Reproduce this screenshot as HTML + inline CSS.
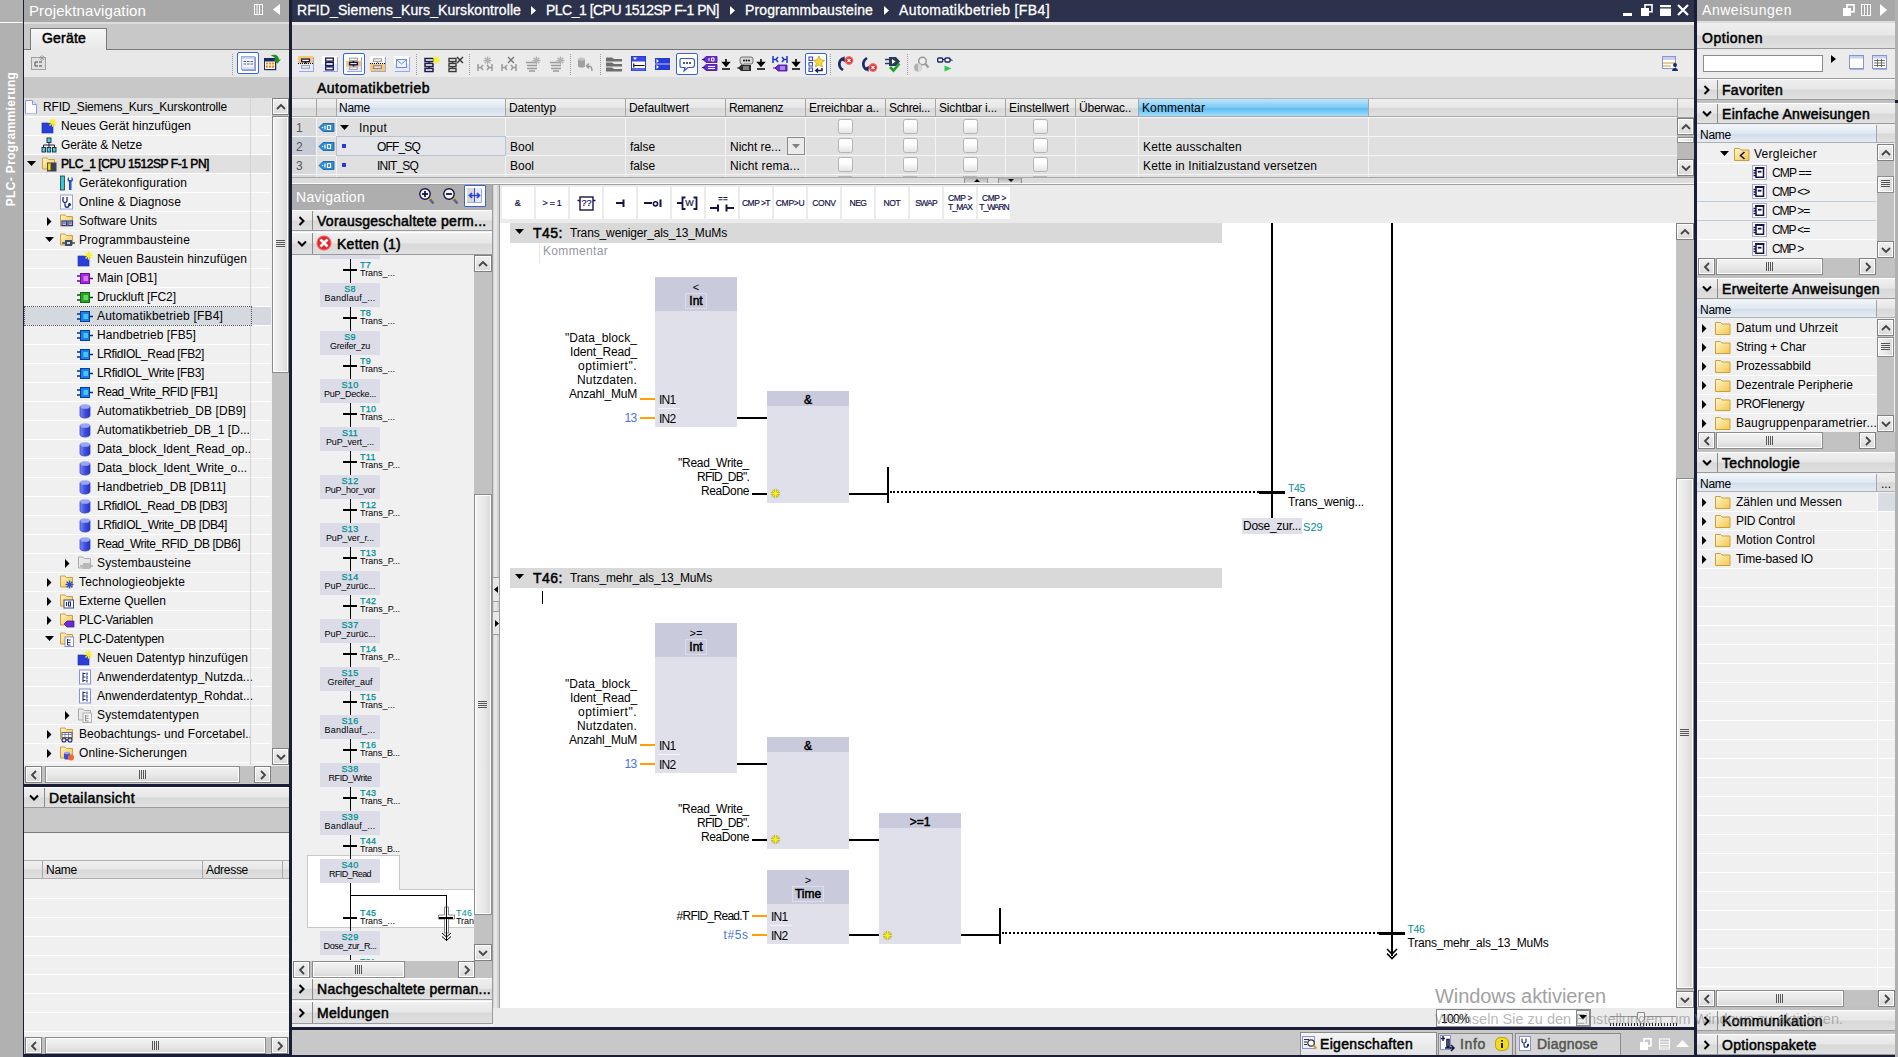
<!DOCTYPE html>
<html><head><meta charset="utf-8"><title>TIA</title>
<style>
html,body{margin:0;padding:0;}
body{width:1898px;height:1057px;overflow:hidden;position:relative;background:#e8e8e8;font-family:"Liberation Sans",sans-serif;font-size:12px;}
div,.a,.t{position:absolute;box-sizing:border-box;}
.t{white-space:pre;}
svg{overflow:visible;}
.hd{background:linear-gradient(#efefef 0%,#e7e7e7 47%,#d8d8d8 53%,#e0e0e0 100%);}
.sb{background:linear-gradient(90deg,#f4f4f4,#e6e6e6 60%,#d8d8d8);border:1px solid #8c8c8c;box-shadow:inset 0 0 0 1px #fff;}
.sbh{background:linear-gradient(#f4f4f4,#e6e6e6 60%,#d8d8d8);border:1px solid #8c8c8c;box-shadow:inset 0 0 0 1px #fff;}
.btn{background:linear-gradient(#f0f0f0,#dadada);border:1px solid #808080;box-shadow:inset 0 0 0 1px #fff;}
</style></head><body>
<div style="left:0px;top:0px;width:1898px;height:1057px;background:#c8c8c8;"></div>
<div style="left:0px;top:0px;width:23px;height:1057px;background:#b1b1b1;"></div>
<div style="left:0px;top:22px;width:23px;height:1px;background:#fff;"></div>
<div style="left:23px;top:0px;width:1px;height:1057px;background:#191e36;"></div>
<span class="t" style="left:10.5px;top:139px;font-size:12px;font-weight:bold;color:#fff;letter-spacing:0.341px;transform:translate(-50%,-50%) rotate(-90deg);">PLC- Programmierung</span>
<div style="left:24px;top:0px;width:265px;height:22px;background:#a8a8a8;"></div>
<span class="t" style="left:29px;top:0.5px;font-size:15px;line-height:19px;color:#fff;letter-spacing:0.114px;">Projektnavigation</span>
<svg class="a" style="left:254px;top:4px;" width="9" height="12" viewBox="0 0 9 12"><rect x=".5" y=".5" width="8" height="10" fill="none" stroke="#fff"/><path d="M3 1v10M5.5 1v10" stroke="#fff"/></svg>
<svg class="a" style="left:273px;top:4px;" width="8" height="11" viewBox="0 0 8 11"><path d="M7 0v11l-7-5.5z" fill="#fff"/></svg>
<div style="left:24px;top:22px;width:265px;height:27px;background:#c8c8c8;"></div>
<div style="left:24px;top:22px;width:265px;height:2px;background:#dcdcdc;"></div>
<div style="left:24px;top:49px;width:265px;height:1px;background:#7a7a7a;"></div>
<div style="left:30px;top:28px;width:77px;height:22px;background:linear-gradient(#f6f6f6,#e8e8e8);border:1px solid #7a7a7a;border-bottom:none;"></div>
<span class="t" style="left:42px;top:28.5px;font-size:14px;line-height:18px;color:#000;-webkit-text-stroke:0.5px #000;letter-spacing:0.200px;">Geräte</span>
<div style="left:24px;top:50px;width:265px;height:27px;background:#e8e8e8;"></div>
<svg class="a" style="left:31px;top:55px;" width="16" height="16" viewBox="0 0 16 16"><rect x=".5" y="2.5" width="14" height="12" fill="#e0e0e0" stroke="#a0a0a0"/><path d="M4 7h3M4 11h3M8 7h3M8 11h3M4 7v4" stroke="#777" stroke-width="1.4"/><path d="M11 0v6M8 3h6M9 1l4 4M13 1l-4 4" stroke="#999" stroke-width=".8"/></svg>
<div style="left:232px;top:54px;width:1px;height:21px;border-left:1px dotted #999;"></div>
<div style="left:237px;top:52px;width:22px;height:22px;background:#fff;border:1px solid #3a62d8;border-radius:2px;"></div>
<svg class="a" style="left:241px;top:56px;" width="15" height="15" viewBox="0 0 15 15"><rect x="1" y="1" width="14" height="14" fill="#8a96d8"/><rect x=".5" y=".5" width="13" height="13" fill="#f4f6ff" stroke="#a0a8e0"/><rect x="1" y="1" width="12" height="2" fill="#c8d0f4"/><path d="M2.500 5.500h2.500M6 5.500h2.500M9.500 5.500h2.500M2.500 8h2.500M6 8h2.500M9.500 8h2.500" stroke="#5a6078" stroke-width="1.100"/><rect x="1" y="11" width="12" height="2" fill="#dfe3fa"/></svg>
<svg class="a" style="left:264px;top:54px;" width="18" height="18" viewBox="0 0 18 18"><rect x="1.5" y="5.5" width="11" height="11" fill="#8a96c8"/><rect x=".5" y="4.5" width="11" height="11" fill="#fff" stroke="#1a2a5a"/><rect x="1" y="5" width="10" height="2.500" fill="#1a2a5a"/><path d="M2 9.500h2.200M5 9.500h2.200M8 9.500h2.200M2 12.700h2.200M5 12.700h2.200M8 12.700h2.200" stroke="#f08a10" stroke-width="2.200"/><path d="M6.500 1.500c4-2 8.500-.5 8.500 4h2l-3.800 4.200-3.800-4.200h2.100c0-2-1.800-3-5-4z" fill="#1f8f2a"/></svg>
<div style="left:24px;top:77px;width:265px;height:21px;background:#c8c8c8;"></div>
<div style="left:24px;top:98px;width:247px;height:667px;background:#f0f0f0;"></div>
<div style="left:24px;top:98px;width:247px;height:18px;background:#e2e2e2;"></div>
<div style="left:24px;top:116px;width:247px;height:1px;background:#fff;"></div>
<svg class="a" style="left:22.5px;top:99px;" width="16" height="16" viewBox="0 0 16 16"><path d="M2.5 1.5h7l4 4v9h-11z" fill="#fafaff" stroke="#8f97d8"/><path d="M9.5 1.5v4h4" fill="#dfe3fa" stroke="#8f97d8"/><path d="M3 14.5h10.5" stroke="#b9bfe8"/></svg>
<span class="t" style="left:43px;top:99.0px;font-size:12px;line-height:16px;color:#000;letter-spacing:-0.174px;">RFID_Siemens_Kurs_Kurskontrolle</span>
<div style="left:24px;top:135px;width:247px;height:1px;background:#fff;"></div>
<svg class="a" style="left:41px;top:118px;" width="16" height="16" viewBox="0 0 16 16"><rect x="1" y="5" width="11" height="10" fill="#2a3fd8"/><rect x="1" y="5" width="11" height="10" fill="none" stroke="#1a2aa8" stroke-width=".6"/><line x1="7.3" y1="4.5" x2="15.7" y2="4.5" stroke="#f5ee2a" stroke-width="1.3"/><line x1="8.5" y1="1.5" x2="14.5" y2="7.5" stroke="#f5ee2a" stroke-width="1.3"/><line x1="11.5" y1="0.3" x2="11.5" y2="8.7" stroke="#f5ee2a" stroke-width="1.3"/><line x1="14.5" y1="1.5" x2="8.5" y2="7.5" stroke="#f5ee2a" stroke-width="1.3"/></svg>
<span class="t" style="left:61px;top:118.0px;font-size:12px;line-height:16px;color:#000;letter-spacing:-0.004px;">Neues Gerät hinzufügen</span>
<div style="left:24px;top:154px;width:247px;height:1px;background:#fff;"></div>
<svg class="a" style="left:41px;top:137px;" width="16" height="16" viewBox="0 0 16 16"><rect x="6" y="1" width="4" height="4.5" fill="#45d0e0" stroke="#223" stroke-width=".9"/><path d="M8 5.5v2.500M2.500 10.500v-2.500h11v2.500M8 8v2.500" stroke="#223" fill="none"/><rect x="1" y="10.500" width="3.500" height="4.500" fill="#45d0e0" stroke="#223" stroke-width=".9"/><rect x="6.200" y="10.500" width="3.500" height="4.500" fill="#45d0e0" stroke="#223" stroke-width=".9"/><rect x="11.500" y="10.500" width="3.500" height="4.500" fill="#45d0e0" stroke="#223" stroke-width=".9"/></svg>
<span class="t" style="left:61px;top:137.0px;font-size:12px;line-height:16px;color:#000;letter-spacing:-0.122px;">Geräte &amp; Netze</span>
<div style="left:24px;top:155px;width:247px;height:18px;background:#e0e0e0;"></div>
<div style="left:24px;top:173px;width:247px;height:1px;background:#fff;"></div>
<svg class="a" style="left:41px;top:156px;" width="16" height="16" viewBox="0 0 16 16"><defs><linearGradient id="fg" x1="0" y1="0" x2="1" y2="1"><stop offset="0" stop-color="#fef3c8"/><stop offset="1" stop-color="#f2c24a"/></linearGradient></defs><path d="M1.5 2h4.500l1.500 1.500h6v9.500h-12z" fill="url(#fg)" stroke="#c9a040" stroke-width="1"/><rect x="6" y="6.500" width="9.500" height="9" fill="#3a4054"/><rect x="7" y="7.500" width="2.500" height="6.500" fill="#f5e61a" stroke="#a89a10" stroke-width=".5"/></svg>
<svg class="a" style="left:27px;top:161px;" width="9" height="6" viewBox="0 0 9 6"><path d="M0 0h9l-4.5 5z" fill="#000"/></svg>
<span class="t" style="left:61px;top:156.0px;font-size:12px;line-height:16px;color:#000;-webkit-text-stroke:0.5px #000;letter-spacing:-0.448px;">PLC_1 [CPU 1512SP F-1 PN]</span>
<div style="left:24px;top:192px;width:247px;height:1px;background:#fff;"></div>
<svg class="a" style="left:59px;top:175px;" width="16" height="16" viewBox="0 0 16 16"><rect x="1.5" y="1" width="4" height="14" fill="#35c7d8" stroke="#333" stroke-width=".8"/><path d="M10 2c-2 1-2 4 0 5v8h2.5v-8c2-1 2-4 0-5v3h-2.5z" fill="#2452c8"/></svg>
<span class="t" style="left:79px;top:175.0px;font-size:12px;line-height:16px;color:#000;letter-spacing:0.137px;">Gerätekonfiguration</span>
<div style="left:24px;top:211px;width:247px;height:1px;background:#fff;"></div>
<svg class="a" style="left:59px;top:194px;" width="16" height="16" viewBox="0 0 16 16"><rect x="1.5" y="1" width="12" height="14" fill="#fff" stroke="#9aa0d8"/><path d="M4 3v4c0 2 4 2 4 0v-4M6 9v2c0 3 4 3 4 0" fill="none" stroke="#1d2a78" stroke-width="1.3"/><circle cx="10.5" cy="10.5" r="1.6" fill="#1d2a78"/></svg>
<span class="t" style="left:79px;top:194.0px;font-size:12px;line-height:16px;color:#000;letter-spacing:0.114px;">Online &amp; Diagnose</span>
<div style="left:24px;top:230px;width:247px;height:1px;background:#fff;"></div>
<svg class="a" style="left:59px;top:213px;" width="16" height="16" viewBox="0 0 16 16"><defs><linearGradient id="fg" x1="0" y1="0" x2="1" y2="1"><stop offset="0" stop-color="#fef3c8"/><stop offset="1" stop-color="#f2c24a"/></linearGradient></defs><path d="M1.5 2h4.500l1.500 1.500h6v9.500h-12z" fill="url(#fg)" stroke="#c9a040" stroke-width="1"/><rect x="3" y="8" width="4.5" height="4.5" fill="none" stroke="#1d3ab8" stroke-width="1.2"/><rect x="9" y="8" width="4.5" height="4.5" fill="none" stroke="#1d3ab8" stroke-width="1.2"/><path d="M4 10h2.5M10 10h2.5" stroke="#1d3ab8"/></svg>
<svg class="a" style="left:47px;top:216.5px;" width="5" height="9" viewBox="0 0 5 9"><path d="M0 0v9l4.500-4.500z" fill="#000"/></svg>
<span class="t" style="left:79px;top:213.0px;font-size:12px;line-height:16px;color:#000;letter-spacing:-0.002px;">Software Units</span>
<div style="left:24px;top:249px;width:247px;height:1px;background:#fff;"></div>
<svg class="a" style="left:59px;top:232px;" width="16" height="16" viewBox="0 0 16 16"><defs><linearGradient id="fg" x1="0" y1="0" x2="1" y2="1"><stop offset="0" stop-color="#fef3c8"/><stop offset="1" stop-color="#f2c24a"/></linearGradient></defs><path d="M1.5 2h4.500l1.500 1.500h6v9.500h-12z" fill="url(#fg)" stroke="#c9a040" stroke-width="1"/><rect x="6" y="8" width="7" height="6" fill="#3c4a6a"/><path d="M3 11h3M13 11h3" stroke="#3c4a6a" stroke-width="1.4"/><rect x="8" y="10" width="3" height="2" fill="#cfd6ea"/></svg>
<svg class="a" style="left:45px;top:237px;" width="9" height="6" viewBox="0 0 9 6"><path d="M0 0h9l-4.5 5z" fill="#000"/></svg>
<span class="t" style="left:79px;top:232.0px;font-size:12px;line-height:16px;color:#000;letter-spacing:0.173px;">Programmbausteine</span>
<div style="left:24px;top:268px;width:247px;height:1px;background:#fff;"></div>
<svg class="a" style="left:77px;top:251px;" width="16" height="16" viewBox="0 0 16 16"><rect x="1" y="5" width="11" height="10" fill="#2a3fd8"/><rect x="1" y="5" width="11" height="10" fill="none" stroke="#1a2aa8" stroke-width=".6"/><line x1="7.3" y1="4.5" x2="15.7" y2="4.5" stroke="#f5ee2a" stroke-width="1.3"/><line x1="8.5" y1="1.5" x2="14.5" y2="7.5" stroke="#f5ee2a" stroke-width="1.3"/><line x1="11.5" y1="0.3" x2="11.5" y2="8.7" stroke="#f5ee2a" stroke-width="1.3"/><line x1="14.5" y1="1.5" x2="8.5" y2="7.5" stroke="#f5ee2a" stroke-width="1.3"/></svg>
<span class="t" style="left:97px;top:251.0px;font-size:12px;line-height:16px;color:#000;letter-spacing:0.102px;">Neuen Baustein hinzufügen</span>
<div style="left:24px;top:287px;width:247px;height:1px;background:#fff;"></div>
<svg class="a" style="left:77px;top:270px;" width="16" height="16" viewBox="0 0 16 16"><path d="M0 6h4M0 11h4M12 8.500h4" stroke="#5a1080" stroke-width="1.700"/><rect x="3.500" y="3.500" width="9" height="10" fill="#a828e0" stroke="#6a10a0"/><rect x="6.500" y="6" width="4.500" height="5" fill="#dc7aff"/></svg>
<span class="t" style="left:97px;top:270.0px;font-size:12px;line-height:16px;color:#000;letter-spacing:-0.002px;">Main [OB1]</span>
<div style="left:24px;top:306px;width:247px;height:1px;background:#fff;"></div>
<svg class="a" style="left:77px;top:289px;" width="16" height="16" viewBox="0 0 16 16"><path d="M0 6h4M0 11h4M12 8.500h4" stroke="#0a4a0a" stroke-width="1.700"/><rect x="3.500" y="3.500" width="9" height="10" fill="#2aa02a" stroke="#106a10"/><rect x="6.500" y="6" width="4.500" height="5" fill="#62d862"/></svg>
<span class="t" style="left:97px;top:289.0px;font-size:12px;line-height:16px;color:#000;letter-spacing:-0.068px;">Druckluft [FC2]</span>
<div style="left:24px;top:307px;width:247px;height:18px;background:#d3d9df;"></div>
<div style="left:24px;top:325px;width:247px;height:1px;background:#fff;"></div>
<div style="left:24px;top:306px;width:228px;height:20px;border:1px dotted #555;"></div>
<svg class="a" style="left:77px;top:308px;" width="16" height="16" viewBox="0 0 16 16"><path d="M0 6h4M0 11h4M12 8.500h4" stroke="#0a2a80" stroke-width="1.700"/><rect x="3.500" y="3.500" width="9" height="10" fill="#1a80e8" stroke="#0a3aa0"/><rect x="6.500" y="6" width="4.500" height="5" fill="#40c8ff"/></svg>
<span class="t" style="left:97px;top:308.0px;font-size:12px;line-height:16px;color:#000;letter-spacing:0.179px;">Automatikbetrieb [FB4]</span>
<div style="left:24px;top:344px;width:247px;height:1px;background:#fff;"></div>
<svg class="a" style="left:77px;top:327px;" width="16" height="16" viewBox="0 0 16 16"><path d="M0 6h4M0 11h4M12 8.500h4" stroke="#0a2a80" stroke-width="1.700"/><rect x="3.500" y="3.500" width="9" height="10" fill="#1a80e8" stroke="#0a3aa0"/><rect x="6.500" y="6" width="4.500" height="5" fill="#40c8ff"/></svg>
<span class="t" style="left:97px;top:327.0px;font-size:12px;line-height:16px;color:#000;letter-spacing:0.095px;">Handbetrieb [FB5]</span>
<div style="left:24px;top:363px;width:247px;height:1px;background:#fff;"></div>
<svg class="a" style="left:77px;top:346px;" width="16" height="16" viewBox="0 0 16 16"><path d="M0 6h4M0 11h4M12 8.500h4" stroke="#0a2a80" stroke-width="1.700"/><rect x="3.500" y="3.500" width="9" height="10" fill="#1a80e8" stroke="#0a3aa0"/><rect x="6.500" y="6" width="4.500" height="5" fill="#40c8ff"/></svg>
<span class="t" style="left:97px;top:346.0px;font-size:12px;line-height:16px;color:#000;letter-spacing:-0.407px;">LRfidIOL_Read [FB2]</span>
<div style="left:24px;top:382px;width:247px;height:1px;background:#fff;"></div>
<svg class="a" style="left:77px;top:365px;" width="16" height="16" viewBox="0 0 16 16"><path d="M0 6h4M0 11h4M12 8.500h4" stroke="#0a2a80" stroke-width="1.700"/><rect x="3.500" y="3.500" width="9" height="10" fill="#1a80e8" stroke="#0a3aa0"/><rect x="6.500" y="6" width="4.500" height="5" fill="#40c8ff"/></svg>
<span class="t" style="left:97px;top:365.0px;font-size:12px;line-height:16px;color:#000;letter-spacing:-0.341px;">LRfidIOL_Write [FB3]</span>
<div style="left:24px;top:401px;width:247px;height:1px;background:#fff;"></div>
<svg class="a" style="left:77px;top:384px;" width="16" height="16" viewBox="0 0 16 16"><path d="M0 6h4M0 11h4M12 8.500h4" stroke="#0a2a80" stroke-width="1.700"/><rect x="3.500" y="3.500" width="9" height="10" fill="#1a80e8" stroke="#0a3aa0"/><rect x="6.500" y="6" width="4.500" height="5" fill="#40c8ff"/></svg>
<span class="t" style="left:97px;top:384.0px;font-size:12px;line-height:16px;color:#000;letter-spacing:-0.468px;">Read_Write_RFID [FB1]</span>
<div style="left:24px;top:420px;width:247px;height:1px;background:#fff;"></div>
<svg class="a" style="left:77px;top:403px;" width="16" height="16" viewBox="0 0 16 16"><defs><linearGradient id="dbg"><stop offset="0" stop-color="#7a88f8"/><stop offset=".5" stop-color="#3d4fe0"/><stop offset="1" stop-color="#2a34c0"/></linearGradient></defs><path d="M3 3.5v9c0 1.6 2.2 2.5 5 2.5s5-.9 5-2.5v-9z" fill="url(#dbg)"/><ellipse cx="8" cy="3.5" rx="5" ry="2.3" fill="#9aa6f5"/><path d="M3 3.5v9c0 1.6 2.2 2.5 5 2.5s5-.9 5-2.5v-9" fill="none" stroke="#2a38b8" stroke-width=".7"/></svg>
<span class="t" style="left:97px;top:403.0px;font-size:12px;line-height:16px;color:#000;letter-spacing:0.090px;">Automatikbetrieb_DB [DB9]</span>
<div style="left:24px;top:439px;width:247px;height:1px;background:#fff;"></div>
<svg class="a" style="left:77px;top:422px;" width="16" height="16" viewBox="0 0 16 16"><defs><linearGradient id="dbg"><stop offset="0" stop-color="#7a88f8"/><stop offset=".5" stop-color="#3d4fe0"/><stop offset="1" stop-color="#2a34c0"/></linearGradient></defs><path d="M3 3.5v9c0 1.6 2.2 2.5 5 2.5s5-.9 5-2.5v-9z" fill="url(#dbg)"/><ellipse cx="8" cy="3.5" rx="5" ry="2.3" fill="#9aa6f5"/><path d="M3 3.5v9c0 1.6 2.2 2.5 5 2.5s5-.9 5-2.5v-9" fill="none" stroke="#2a38b8" stroke-width=".7"/></svg>
<span class="t" style="left:97px;top:422.0px;font-size:12px;line-height:16px;color:#000;letter-spacing:0.034px;">Automatikbetrieb_DB_1 [D...</span>
<div style="left:24px;top:458px;width:247px;height:1px;background:#fff;"></div>
<svg class="a" style="left:77px;top:441px;" width="16" height="16" viewBox="0 0 16 16"><defs><linearGradient id="dbg"><stop offset="0" stop-color="#7a88f8"/><stop offset=".5" stop-color="#3d4fe0"/><stop offset="1" stop-color="#2a34c0"/></linearGradient></defs><path d="M3 3.5v9c0 1.6 2.2 2.5 5 2.5s5-.9 5-2.5v-9z" fill="url(#dbg)"/><ellipse cx="8" cy="3.5" rx="5" ry="2.3" fill="#9aa6f5"/><path d="M3 3.5v9c0 1.6 2.2 2.5 5 2.5s5-.9 5-2.5v-9" fill="none" stroke="#2a38b8" stroke-width=".7"/></svg>
<span class="t" style="left:97px;top:441.0px;font-size:12px;line-height:16px;color:#000;letter-spacing:-0.056px;">Data_block_Ident_Read_op..</span>
<div style="left:24px;top:477px;width:247px;height:1px;background:#fff;"></div>
<svg class="a" style="left:77px;top:460px;" width="16" height="16" viewBox="0 0 16 16"><defs><linearGradient id="dbg"><stop offset="0" stop-color="#7a88f8"/><stop offset=".5" stop-color="#3d4fe0"/><stop offset="1" stop-color="#2a34c0"/></linearGradient></defs><path d="M3 3.5v9c0 1.6 2.2 2.5 5 2.5s5-.9 5-2.5v-9z" fill="url(#dbg)"/><ellipse cx="8" cy="3.5" rx="5" ry="2.3" fill="#9aa6f5"/><path d="M3 3.5v9c0 1.6 2.2 2.5 5 2.5s5-.9 5-2.5v-9" fill="none" stroke="#2a38b8" stroke-width=".7"/></svg>
<span class="t" style="left:97px;top:460.0px;font-size:12px;line-height:16px;color:#000;letter-spacing:-0.044px;">Data_block_Ident_Write_o...</span>
<div style="left:24px;top:496px;width:247px;height:1px;background:#fff;"></div>
<svg class="a" style="left:77px;top:479px;" width="16" height="16" viewBox="0 0 16 16"><defs><linearGradient id="dbg"><stop offset="0" stop-color="#7a88f8"/><stop offset=".5" stop-color="#3d4fe0"/><stop offset="1" stop-color="#2a34c0"/></linearGradient></defs><path d="M3 3.5v9c0 1.6 2.2 2.5 5 2.5s5-.9 5-2.5v-9z" fill="url(#dbg)"/><ellipse cx="8" cy="3.5" rx="5" ry="2.3" fill="#9aa6f5"/><path d="M3 3.5v9c0 1.6 2.2 2.5 5 2.5s5-.9 5-2.5v-9" fill="none" stroke="#2a38b8" stroke-width=".7"/></svg>
<span class="t" style="left:97px;top:479.0px;font-size:12px;line-height:16px;color:#000;letter-spacing:0.055px;">Handbetrieb_DB [DB11]</span>
<div style="left:24px;top:515px;width:247px;height:1px;background:#fff;"></div>
<svg class="a" style="left:77px;top:498px;" width="16" height="16" viewBox="0 0 16 16"><defs><linearGradient id="dbg"><stop offset="0" stop-color="#7a88f8"/><stop offset=".5" stop-color="#3d4fe0"/><stop offset="1" stop-color="#2a34c0"/></linearGradient></defs><path d="M3 3.5v9c0 1.6 2.2 2.5 5 2.5s5-.9 5-2.5v-9z" fill="url(#dbg)"/><ellipse cx="8" cy="3.5" rx="5" ry="2.3" fill="#9aa6f5"/><path d="M3 3.5v9c0 1.6 2.2 2.5 5 2.5s5-.9 5-2.5v-9" fill="none" stroke="#2a38b8" stroke-width=".7"/></svg>
<span class="t" style="left:97px;top:498.0px;font-size:12px;line-height:16px;color:#000;letter-spacing:-0.427px;">LRfidIOL_Read_DB [DB3]</span>
<div style="left:24px;top:534px;width:247px;height:1px;background:#fff;"></div>
<svg class="a" style="left:77px;top:517px;" width="16" height="16" viewBox="0 0 16 16"><defs><linearGradient id="dbg"><stop offset="0" stop-color="#7a88f8"/><stop offset=".5" stop-color="#3d4fe0"/><stop offset="1" stop-color="#2a34c0"/></linearGradient></defs><path d="M3 3.5v9c0 1.6 2.2 2.5 5 2.5s5-.9 5-2.5v-9z" fill="url(#dbg)"/><ellipse cx="8" cy="3.5" rx="5" ry="2.3" fill="#9aa6f5"/><path d="M3 3.5v9c0 1.6 2.2 2.5 5 2.5s5-.9 5-2.5v-9" fill="none" stroke="#2a38b8" stroke-width=".7"/></svg>
<span class="t" style="left:97px;top:517.0px;font-size:12px;line-height:16px;color:#000;letter-spacing:-0.369px;">LRfidIOL_Write_DB [DB4]</span>
<div style="left:24px;top:553px;width:247px;height:1px;background:#fff;"></div>
<svg class="a" style="left:77px;top:536px;" width="16" height="16" viewBox="0 0 16 16"><defs><linearGradient id="dbg"><stop offset="0" stop-color="#7a88f8"/><stop offset=".5" stop-color="#3d4fe0"/><stop offset="1" stop-color="#2a34c0"/></linearGradient></defs><path d="M3 3.5v9c0 1.6 2.2 2.5 5 2.5s5-.9 5-2.5v-9z" fill="url(#dbg)"/><ellipse cx="8" cy="3.5" rx="5" ry="2.3" fill="#9aa6f5"/><path d="M3 3.5v9c0 1.6 2.2 2.5 5 2.5s5-.9 5-2.5v-9" fill="none" stroke="#2a38b8" stroke-width=".7"/></svg>
<span class="t" style="left:97px;top:536.0px;font-size:12px;line-height:16px;color:#000;letter-spacing:-0.479px;">Read_Write_RFID_DB [DB6]</span>
<div style="left:24px;top:572px;width:247px;height:1px;background:#fff;"></div>
<svg class="a" style="left:77px;top:555px;" width="16" height="16" viewBox="0 0 16 16"><path d="M1.500 2h4.500l1.500 1.500h6v9.500h-12z" fill="#e8e8e8" stroke="#acacac" stroke-width="1"/><rect x="6" y="8" width="7" height="6" fill="#b8b8b8"/><path d="M3 11h3M13 11h3" stroke="#a8a8a8" stroke-width="1.4"/></svg>
<svg class="a" style="left:65px;top:558.5px;" width="5" height="9" viewBox="0 0 5 9"><path d="M0 0v9l4.500-4.500z" fill="#000"/></svg>
<span class="t" style="left:97px;top:555.0px;font-size:12px;line-height:16px;color:#000;letter-spacing:0.130px;">Systembausteine</span>
<div style="left:24px;top:591px;width:247px;height:1px;background:#fff;"></div>
<svg class="a" style="left:59px;top:574px;" width="16" height="16" viewBox="0 0 16 16"><defs><linearGradient id="fg" x1="0" y1="0" x2="1" y2="1"><stop offset="0" stop-color="#fef3c8"/><stop offset="1" stop-color="#f2c24a"/></linearGradient></defs><path d="M1.5 2h4.500l1.500 1.500h6v9.500h-12z" fill="url(#fg)" stroke="#c9a040" stroke-width="1"/><line x1="6.5" y1="10.5" x2="14.5" y2="10.5" stroke="#2452c8" stroke-width="1.3"/><line x1="7.7" y1="7.7" x2="13.3" y2="13.3" stroke="#2452c8" stroke-width="1.3"/><line x1="10.5" y1="6.5" x2="10.5" y2="14.5" stroke="#2452c8" stroke-width="1.3"/><line x1="13.3" y1="7.7" x2="7.7" y2="13.3" stroke="#2452c8" stroke-width="1.3"/></svg>
<svg class="a" style="left:47px;top:577.5px;" width="5" height="9" viewBox="0 0 5 9"><path d="M0 0v9l4.500-4.500z" fill="#000"/></svg>
<span class="t" style="left:79px;top:574.0px;font-size:12px;line-height:16px;color:#000;letter-spacing:0.181px;">Technologieobjekte</span>
<div style="left:24px;top:610px;width:247px;height:1px;background:#fff;"></div>
<svg class="a" style="left:59px;top:593px;" width="16" height="16" viewBox="0 0 16 16"><defs><linearGradient id="fg" x1="0" y1="0" x2="1" y2="1"><stop offset="0" stop-color="#fef3c8"/><stop offset="1" stop-color="#f2c24a"/></linearGradient></defs><path d="M1.5 2h4.500l1.500 1.500h6v9.500h-12z" fill="url(#fg)" stroke="#c9a040" stroke-width="1"/><rect x="5" y="7" width="9.5" height="8" fill="#fff" stroke="#3c4a8a"/><path d="M7.5 9v4M9.5 9h2v4h-2z" stroke="#1d2a78" fill="none" stroke-width="1.1"/></svg>
<svg class="a" style="left:47px;top:596.5px;" width="5" height="9" viewBox="0 0 5 9"><path d="M0 0v9l4.500-4.500z" fill="#000"/></svg>
<span class="t" style="left:79px;top:593.0px;font-size:12px;line-height:16px;color:#000;letter-spacing:0.063px;">Externe Quellen</span>
<div style="left:24px;top:629px;width:247px;height:1px;background:#fff;"></div>
<svg class="a" style="left:59px;top:612px;" width="16" height="16" viewBox="0 0 16 16"><defs><linearGradient id="fg" x1="0" y1="0" x2="1" y2="1"><stop offset="0" stop-color="#fef3c8"/><stop offset="1" stop-color="#f2c24a"/></linearGradient></defs><path d="M1.5 2h4.500l1.500 1.500h6v9.500h-12z" fill="url(#fg)" stroke="#c9a040" stroke-width="1"/><path d="M5 12l3-3h7v6h-7z" fill="#6a2ad8" stroke="#3a168a" stroke-width=".7"/></svg>
<svg class="a" style="left:47px;top:615.5px;" width="5" height="9" viewBox="0 0 5 9"><path d="M0 0v9l4.500-4.500z" fill="#000"/></svg>
<span class="t" style="left:79px;top:612.0px;font-size:12px;line-height:16px;color:#000;letter-spacing:-0.242px;">PLC-Variablen</span>
<div style="left:24px;top:648px;width:247px;height:1px;background:#fff;"></div>
<svg class="a" style="left:59px;top:631px;" width="16" height="16" viewBox="0 0 16 16"><defs><linearGradient id="fg" x1="0" y1="0" x2="1" y2="1"><stop offset="0" stop-color="#fef3c8"/><stop offset="1" stop-color="#f2c24a"/></linearGradient></defs><path d="M1.5 2h4.500l1.500 1.500h6v9.500h-12z" fill="url(#fg)" stroke="#c9a040" stroke-width="1"/><rect x="6" y="6" width="8.5" height="9.5" fill="#fff" stroke="#8a90c8"/><path d="M8.5 8v6M8.5 9h3M8.5 11.5h3M8.5 14h3" stroke="#1d2a78" fill="none"/></svg>
<svg class="a" style="left:45px;top:636px;" width="9" height="6" viewBox="0 0 9 6"><path d="M0 0h9l-4.5 5z" fill="#000"/></svg>
<span class="t" style="left:79px;top:631.0px;font-size:12px;line-height:16px;color:#000;letter-spacing:-0.265px;">PLC-Datentypen</span>
<div style="left:24px;top:667px;width:247px;height:1px;background:#fff;"></div>
<svg class="a" style="left:77px;top:650px;" width="16" height="16" viewBox="0 0 16 16"><rect x="1" y="5" width="11" height="10" fill="#2a3fd8"/><rect x="1" y="5" width="11" height="10" fill="none" stroke="#1a2aa8" stroke-width=".6"/><line x1="7.3" y1="4.5" x2="15.7" y2="4.5" stroke="#f5ee2a" stroke-width="1.3"/><line x1="8.5" y1="1.5" x2="14.5" y2="7.5" stroke="#f5ee2a" stroke-width="1.3"/><line x1="11.5" y1="0.3" x2="11.5" y2="8.7" stroke="#f5ee2a" stroke-width="1.3"/><line x1="14.5" y1="1.5" x2="8.5" y2="7.5" stroke="#f5ee2a" stroke-width="1.3"/></svg>
<span class="t" style="left:97px;top:650.0px;font-size:12px;line-height:16px;color:#000;letter-spacing:0.089px;">Neuen Datentyp hinzufügen</span>
<div style="left:24px;top:686px;width:247px;height:1px;background:#fff;"></div>
<svg class="a" style="left:77px;top:669px;" width="16" height="16" viewBox="0 0 16 16"><rect x="2.5" y="1" width="11" height="14" fill="#fff" stroke="#8a90d8"/><path d="M6 3.5v9.5M6 4.5h2.5M6 8h2.5M6 11.5h2.5M10 3.5v3M10 7v3M10 10.5v3" stroke="#1d2a78" fill="none" stroke-width="1.1"/></svg>
<span class="t" style="left:97px;top:669.0px;font-size:12px;line-height:16px;color:#000;letter-spacing:0.047px;">Anwenderdatentyp_Nutzda...</span>
<div style="left:24px;top:705px;width:247px;height:1px;background:#fff;"></div>
<svg class="a" style="left:77px;top:688px;" width="16" height="16" viewBox="0 0 16 16"><rect x="2.5" y="1" width="11" height="14" fill="#fff" stroke="#8a90d8"/><path d="M6 3.5v9.5M6 4.5h2.5M6 8h2.5M6 11.5h2.5M10 3.5v3M10 7v3M10 10.5v3" stroke="#1d2a78" fill="none" stroke-width="1.1"/></svg>
<span class="t" style="left:97px;top:688.0px;font-size:12px;line-height:16px;color:#000;letter-spacing:0.022px;">Anwenderdatentyp_Rohdat...</span>
<div style="left:24px;top:724px;width:247px;height:1px;background:#fff;"></div>
<svg class="a" style="left:77px;top:707px;" width="16" height="16" viewBox="0 0 16 16"><path d="M1.500 2h4.500l1.500 1.500h6v9.500h-12z" fill="#e8e8e8" stroke="#acacac" stroke-width="1"/><rect x="6" y="6" width="8.5" height="9.5" fill="#f4f4f4" stroke="#b0b0b0"/><path d="M8.5 8v6M8.5 9h3M8.5 11.5h3M8.5 14h3" stroke="#909090" fill="none"/></svg>
<svg class="a" style="left:65px;top:710.5px;" width="5" height="9" viewBox="0 0 5 9"><path d="M0 0v9l4.500-4.500z" fill="#000"/></svg>
<span class="t" style="left:97px;top:707.0px;font-size:12px;line-height:16px;color:#000;letter-spacing:0.163px;">Systemdatentypen</span>
<div style="left:24px;top:743px;width:247px;height:1px;background:#fff;"></div>
<svg class="a" style="left:59px;top:726px;" width="16" height="16" viewBox="0 0 16 16"><defs><linearGradient id="fg" x1="0" y1="0" x2="1" y2="1"><stop offset="0" stop-color="#fef3c8"/><stop offset="1" stop-color="#f2c24a"/></linearGradient></defs><path d="M1.5 2h4.500l1.500 1.500h6v9.500h-12z" fill="url(#fg)" stroke="#c9a040" stroke-width="1"/><rect x="3" y="6.5" width="10" height="5" fill="#fff" stroke="#3c4a8a" stroke-width=".8"/><path d="M3 8.5h10M6 6.5v5M9.5 6.5v5" stroke="#3c4a8a" stroke-width=".6"/><circle cx="5" cy="14" r="2" fill="none" stroke="#1d2a78" stroke-width="1.1"/><circle cx="11" cy="14" r="2" fill="none" stroke="#1d2a78" stroke-width="1.1"/><path d="M7 14h2" stroke="#1d2a78"/></svg>
<svg class="a" style="left:47px;top:729.5px;" width="5" height="9" viewBox="0 0 5 9"><path d="M0 0v9l4.500-4.500z" fill="#000"/></svg>
<span class="t" style="left:79px;top:726.0px;font-size:12px;line-height:16px;color:#000;letter-spacing:0.074px;">Beobachtungs- und Forcetabel..</span>
<div style="left:24px;top:762px;width:247px;height:1px;background:#fff;"></div>
<svg class="a" style="left:59px;top:745px;" width="16" height="16" viewBox="0 0 16 16"><defs><linearGradient id="fg" x1="0" y1="0" x2="1" y2="1"><stop offset="0" stop-color="#fef3c8"/><stop offset="1" stop-color="#f2c24a"/></linearGradient></defs><path d="M1.5 2h4.500l1.500 1.500h6v9.500h-12z" fill="url(#fg)" stroke="#c9a040" stroke-width="1"/><path d="M5 8v5c0 1 1.5 1.5 3 1.5s3-.5 3-1.5v-5z" fill="#3d4fe0"/><ellipse cx="8" cy="8" rx="3" ry="1.3" fill="#9aa6f5"/><circle cx="12" cy="12.5" r="3" fill="#f2682a"/></svg>
<svg class="a" style="left:47px;top:748.5px;" width="5" height="9" viewBox="0 0 5 9"><path d="M0 0v9l4.500-4.500z" fill="#000"/></svg>
<span class="t" style="left:79px;top:745.0px;font-size:12px;line-height:16px;color:#000;letter-spacing:0.108px;">Online-Sicherungen</span>
<svg class="a" style="left:59px;top:764px;" width="16" height="16" viewBox="0 0 16 16"><defs><linearGradient id="yg" x1="0" y1="0" x2="1" y2="1"><stop offset="0" stop-color="#fff6d0"/><stop offset="1" stop-color="#f4c64a"/></linearGradient></defs><path d="M.5 2.500h5l1.500 1.500h8v10.500h-14.500z" fill="url(#yg)" stroke="#c9a040" stroke-width="1"/></svg>
<div style="left:24px;top:765px;width:265px;height:1px;background:#f0f0f0;"></div>
<div style="left:250px;top:98px;width:1px;height:667px;background:#d4d4d4;"></div>
<div style="left:271px;top:98px;width:18px;height:667px;background:#f0f0f0;"></div>
<div style="left:272px;top:98px;width:17px;height:667px;background:#c2c2c2;"></div>
<div class="btn" style="left:272px;top:98px;width:17px;height:17px;"></div>
<svg class="a" style="left:280.5px;top:106.5px;" width="1" height="1" viewBox="0 0 1 1"><path d="M-4 2l4-4 4 4" fill="none" stroke="#444" stroke-width="1.8"/></svg>
<div class="btn" style="left:272px;top:748px;width:17px;height:17px;"></div>
<svg class="a" style="left:280.5px;top:756.5px;" width="1" height="1" viewBox="0 0 1 1"><path d="M-4 -2l4 4 4-4" fill="none" stroke="#444" stroke-width="1.8"/></svg>
<div class="sb" style="left:272px;top:116px;width:17px;height:257px;"></div>
<svg class="a" style="left:276px;top:240px;" width="9" height="8" viewBox="0 0 9 8"><path d="M0 .5h9M0 2.5h9M0 4.5h9M0 6.5h9" stroke="#555" stroke-width="1"/></svg>
<div style="left:24px;top:765px;width:265px;height:2px;background:#f0f0f0;"></div>
<div style="left:25px;top:766px;width:264px;height:17px;background:#c2c2c2;"></div>
<div class="btn" style="left:25px;top:766px;width:17px;height:17px;"></div>
<svg class="a" style="left:33.5px;top:774.5px;" width="1" height="1" viewBox="0 0 1 1"><path d="M2 -4l-4 4 4 4" fill="none" stroke="#444" stroke-width="1.8"/></svg>
<div class="btn" style="left:254px;top:766px;width:17px;height:17px;"></div>
<svg class="a" style="left:262.5px;top:774.5px;" width="1" height="1" viewBox="0 0 1 1"><path d="M-2 -4l4 4-4 4" fill="none" stroke="#444" stroke-width="1.8"/></svg>
<div class="sbh" style="left:45px;top:766px;width:195px;height:17px;"></div>
<svg class="a" style="left:138.5px;top:770px;" width="8" height="9" viewBox="0 0 8 9"><path d="M.5 0v9M2.5 0v9M4.5 0v9M6.5 0v9" stroke="#555" stroke-width="1"/></svg>
<div style="left:24px;top:784px;width:265px;height:3px;background:#191e36;"></div>
<div class="hd" style="left:24px;top:787px;width:265px;height:21px;border-top:1px solid #fff;border-bottom:1px solid #9a9a9a;"></div>
<div style="left:44px;top:788px;width:1px;height:19px;background:#8a8a8a;"></div>
<svg class="a" style="left:29px;top:793.5px;" width="10" height="8" viewBox="0 0 10 8"><path d="M1 1.5l4 4 4-4" fill="none" stroke="#000" stroke-width="2"/></svg>
<span class="t" style="left:49px;top:788.5px;font-size:14px;line-height:18px;color:#000;-webkit-text-stroke:0.5px #000;letter-spacing:0.450px;">Detailansicht</span>
<div style="left:24px;top:808px;width:265px;height:24px;background:#c9c9c9;"></div>
<div style="left:24px;top:832px;width:265px;height:1px;background:#7a7a7a;"></div>
<div style="left:24px;top:833px;width:265px;height:204px;background:#f0f0f0;"></div>
<div class="hd" style="left:24px;top:860px;width:265px;height:19px;border-top:1px solid #b0b0b0;border-bottom:1px solid #b0b0b0;"></div>
<div style="left:42px;top:861px;width:1px;height:17px;background:#a8a8a8;"></div>
<div style="left:202px;top:861px;width:1px;height:17px;background:#a8a8a8;"></div>
<div style="left:282px;top:861px;width:1px;height:17px;background:#a8a8a8;"></div>
<span class="t" style="left:46px;top:862.0px;font-size:12px;line-height:16px;color:#000;letter-spacing:-0.252px;">Name</span>
<span class="t" style="left:206px;top:862.0px;font-size:12px;line-height:16px;color:#000;letter-spacing:-0.289px;">Adresse</span>
<div style="left:24px;top:898px;width:265px;height:1px;background:#fff;"></div>
<div style="left:24px;top:917px;width:265px;height:1px;background:#fff;"></div>
<div style="left:24px;top:936px;width:265px;height:1px;background:#fff;"></div>
<div style="left:24px;top:955px;width:265px;height:1px;background:#fff;"></div>
<div style="left:24px;top:974px;width:265px;height:1px;background:#fff;"></div>
<div style="left:24px;top:993px;width:265px;height:1px;background:#fff;"></div>
<div style="left:24px;top:1012px;width:265px;height:1px;background:#fff;"></div>
<div style="left:24px;top:1031px;width:265px;height:1px;background:#fff;"></div>
<div style="left:25px;top:1037px;width:263px;height:17px;background:#c2c2c2;"></div>
<div class="btn" style="left:25px;top:1037px;width:17px;height:17px;"></div>
<svg class="a" style="left:33.5px;top:1045.5px;" width="1" height="1" viewBox="0 0 1 1"><path d="M2 -4l-4 4 4 4" fill="none" stroke="#444" stroke-width="1.8"/></svg>
<div class="btn" style="left:271px;top:1037px;width:17px;height:17px;"></div>
<svg class="a" style="left:279.5px;top:1045.5px;" width="1" height="1" viewBox="0 0 1 1"><path d="M-2 -4l4 4-4 4" fill="none" stroke="#444" stroke-width="1.8"/></svg>
<div class="sbh" style="left:45px;top:1037px;width:221px;height:17px;"></div>
<svg class="a" style="left:151.5px;top:1041px;" width="8" height="9" viewBox="0 0 8 9"><path d="M.5 0v9M2.5 0v9M4.5 0v9M6.5 0v9" stroke="#555" stroke-width="1"/></svg>
<div style="left:24px;top:1054px;width:265px;height:3px;background:#191e36;"></div>
<div style="left:289px;top:0px;width:3px;height:1057px;background:#191e36;"></div>
<div style="left:292px;top:0px;width:1402px;height:22px;background:#2c324b;"></div>
<span class="t" style="left:297px;top:0.5px;font-size:14px;line-height:18px;color:#fff;letter-spacing:0.097px;-webkit-text-stroke:0.3px #fff;">RFID_Siemens_Kurs_Kurskontrolle</span>
<span class="t" style="left:546px;top:0.5px;font-size:14px;line-height:18px;color:#fff;letter-spacing:-0.509px;-webkit-text-stroke:0.3px #fff;">PLC_1 [CPU 1512SP F-1 PN]</span>
<span class="t" style="left:745px;top:0.5px;font-size:14px;line-height:18px;color:#fff;letter-spacing:0.114px;-webkit-text-stroke:0.3px #fff;">Programmbausteine</span>
<span class="t" style="left:899px;top:0.5px;font-size:14px;line-height:18px;color:#fff;letter-spacing:0.391px;-webkit-text-stroke:0.3px #fff;">Automatikbetrieb [FB4]</span>
<svg class="a" style="left:531px;top:6px;" width="5" height="9" viewBox="0 0 5 9"><path d="M0 0v9l5-4.5z" fill="#fff"/></svg>
<svg class="a" style="left:730px;top:6px;" width="5" height="9" viewBox="0 0 5 9"><path d="M0 0v9l5-4.5z" fill="#fff"/></svg>
<svg class="a" style="left:884px;top:6px;" width="5" height="9" viewBox="0 0 5 9"><path d="M0 0v9l5-4.5z" fill="#fff"/></svg>
<svg class="a" style="left:1623px;top:4px;" width="70" height="14" viewBox="0 0 70 14"><rect x="0" y="9" width="9" height="3" fill="#fff"/><rect x="22" y="0.8" width="7" height="7" fill="none" stroke="#fff" stroke-width="1.6"/><rect x="18" y="4" width="8" height="8" fill="#fff"/><rect x="37" y="1" width="11" height="11" fill="#fff"/><rect x="37" y="3.2" width="11" height="1.3" fill="#2a3048"/><path d="M55 1l10 10M65 1l-10 10" stroke="#fff" stroke-width="2.2"/></svg>
<div style="left:292px;top:22px;width:1402px;height:3px;background:#ebebeb;"></div>
<div style="left:292px;top:25px;width:1402px;height:24px;background:#cbcbcb;"></div>
<div style="left:292px;top:49px;width:1402px;height:1px;background:#747474;"></div>
<div style="left:292px;top:50px;width:1402px;height:27px;background:#ebebeb;"></div>
<div style="left:292px;top:77px;width:1402px;height:21px;background:#dedede;"></div>
<span class="t" style="left:317px;top:78.5px;font-size:14px;line-height:18px;color:#000;-webkit-text-stroke:0.5px #000;letter-spacing:0.497px;">Automatikbetrieb</span>
<svg class="a" style="left:298.0px;top:56.0px;" width="16" height="16" viewBox="0 0 16 16"><rect x="1" y="1" width="15" height="15" fill="#9aa6ea"/><rect x="0" y="0" width="15" height="15" fill="#fff"/><rect x="0" y="8" width="15" height="7" fill="#e6eaff"/><rect x="0" y="0" width="15" height="7.500" fill="#f9c873"/><path d="M0 7.500h15" stroke="#000" stroke-width="1.200" stroke-dasharray="1 1"/><rect x="3.600" y="3.100" width="7.800" height="2.600" fill="#fff" stroke="#12154a" stroke-width="1.300"/><path d="M7.500 5.800v1.800" stroke="#12154a" stroke-width="1.600"/><rect x="3.600" y="9.600" width="7.800" height="2.600" fill="#fff" stroke="#a8a8a8" stroke-width="1.200"/></svg>
<svg class="a" style="left:322.0px;top:56.0px;" width="16" height="16" viewBox="0 0 16 16"><rect x="1" y="1" width="15" height="15" fill="#9aa6ea"/><rect x="0" y="0" width="15" height="15" fill="#fff"/><rect x="0" y="8" width="15" height="7" fill="#e6eaff"/><path d="M7.500 2.500v11" stroke="#12154a" stroke-width="1.600"/><rect x="3.700" y="2.100" width="7.600" height="3" fill="#fff" stroke="#12154a" stroke-width="1.300"/><rect x="3.700" y="6.500" width="7.600" height="3" fill="#fff" stroke="#12154a" stroke-width="1.300"/><rect x="3.700" y="10.900" width="7.600" height="3" fill="#fff" stroke="#12154a" stroke-width="1.300"/></svg>
<div style="left:343px;top:53px;width:22px;height:22px;background:#fff;border:1px solid #3a62d8;border-radius:2px;"></div>
<svg class="a" style="left:346.0px;top:56.0px;" width="16" height="16" viewBox="0 0 16 16"><rect x="1" y="1" width="15" height="15" fill="#9aa6ea"/><rect x="0" y="0" width="15" height="15" fill="#fff"/><rect x="0" y="8" width="15" height="7" fill="#e6eaff"/><rect x="0" y="5" width="15" height="5.500" fill="#f9c873"/><rect x="3.600" y="2.200" width="7.800" height="2.400" fill="#fff" stroke="#a8a8a8" stroke-width="1.200"/><rect x="3.600" y="11" width="7.800" height="2.400" fill="#fff" stroke="#a8a8a8" stroke-width="1.200"/><rect x="3.600" y="6.400" width="7.800" height="2.400" fill="#fff" stroke="#12154a" stroke-width="1.400"/><path d="M7.500 9v1.500M7.500 5v1" stroke="#12154a" stroke-width="1.600"/></svg>
<svg class="a" style="left:370.0px;top:56.0px;" width="16" height="16" viewBox="0 0 16 16"><rect x="1" y="1" width="15" height="15" fill="#9aa6ea"/><rect x="0" y="0" width="15" height="15" fill="#fff"/><rect x="0" y="8" width="15" height="7" fill="#e6eaff"/><rect x="0" y="7.500" width="15" height="7.500" fill="#f9c873"/><path d="M0 7.500h15" stroke="#000" stroke-width="1.200" stroke-dasharray="1 1"/><rect x="3.600" y="2.800" width="7.800" height="2.600" fill="#fff" stroke="#a8a8a8" stroke-width="1.200"/><rect x="3.600" y="9.800" width="7.800" height="2.600" fill="#fff" stroke="#8a8aa0" stroke-width="1.300"/><path d="M7.500 5.500v1.500" stroke="#8a8aa0" stroke-width="1.400"/></svg>
<svg class="a" style="left:394.0px;top:56.0px;" width="16" height="16" viewBox="0 0 16 16"><rect x="1" y="1" width="15" height="15" fill="#9aa6ea"/><rect x="0" y="0" width="15" height="15" fill="#fff"/><rect x="0" y="8" width="15" height="7" fill="#e6eaff"/><rect x="2.500" y="3.500" width="10" height="8" fill="#f0f4ff" stroke="#6a8ae8"/><path d="M2.500 3.500l5 4.500 5-4.500" fill="none" stroke="#6a8ae8"/></svg>
<div style="left:416px;top:54px;width:1px;height:21px;border-left:1px dotted #999;"></div>
<svg class="a" style="left:424.0px;top:56.0px;" width="16" height="16" viewBox="0 0 16 16"><path d="M1 2.5h8v3h-8zM1 7.5h8v3h-8zM1 12.5h8v3h-8zM5 5.5v2M5 10.5v2" fill="#fff" stroke="#1a1f4a" stroke-width="1.5"/><line x1="7.8" y1="4.0" x2="16.2" y2="4.0" stroke="#f5ee2a" stroke-width="1.3"/><line x1="9.0" y1="1.0" x2="15.0" y2="7.0" stroke="#f5ee2a" stroke-width="1.3"/><line x1="12.0" y1="-0.2" x2="12.0" y2="8.2" stroke="#f5ee2a" stroke-width="1.3"/><line x1="15.0" y1="1.0" x2="9.0" y2="7.0" stroke="#f5ee2a" stroke-width="1.3"/></svg>
<svg class="a" style="left:448.0px;top:56.0px;" width="16" height="16" viewBox="0 0 16 16"><path d="M1 2.5h7v3h-7zM1 7.5h7v3h-7zM1 12.5h7v3h-7zM4.5 5.5v2M4.5 10.5v2" fill="#fff" stroke="#3a3a3a" stroke-width="1.4"/><path d="M9 1l6 6M15 1l-6 6" stroke="#3a3a3a" stroke-width="1.5"/></svg>
<div style="left:469px;top:54px;width:1px;height:21px;border-left:1px dotted #999;"></div>
<svg class="a" style="left:477.0px;top:56.0px;" width="16" height="16" viewBox="0 0 16 16"><path d="M1 8v7M1 11.5h3l2-2.5M4 11.5l2 2.5M15 8v7M15 11.5h-3l-2-2.5M12 11.5l-2 2.5" fill="none" stroke="#9a9a9a" stroke-width="1.5"/><line x1="6.5" y1="4.5" x2="14.5" y2="4.5" stroke="#b0b0b0" stroke-width="1.3"/><line x1="7.7" y1="1.7" x2="13.3" y2="7.3" stroke="#b0b0b0" stroke-width="1.3"/><line x1="10.5" y1="0.5" x2="10.5" y2="8.5" stroke="#b0b0b0" stroke-width="1.3"/><line x1="13.3" y1="1.7" x2="7.7" y2="7.3" stroke="#b0b0b0" stroke-width="1.3"/></svg>
<svg class="a" style="left:501.0px;top:56.0px;" width="16" height="16" viewBox="0 0 16 16"><path d="M1 8v7M1 11.5h3l2-2.5M4 11.5l2 2.5M15 8v7M15 11.5h-3l-2-2.5M12 11.5l-2 2.5" fill="none" stroke="#9a9a9a" stroke-width="1.5"/><path d="M7 1l6 6M13 1l-6 6" stroke="#777" stroke-width="1.4"/></svg>
<svg class="a" style="left:525.0px;top:56.0px;" width="16" height="16" viewBox="0 0 16 16"><path d="M1 6.5h10M2 9.5h10M2 12.5h10M4 15h6" stroke="#9a9a9a" stroke-width="1.6"/><line x1="7.5" y1="4.5" x2="15.5" y2="4.5" stroke="#b0b0b0" stroke-width="1.3"/><line x1="8.7" y1="1.7" x2="14.3" y2="7.3" stroke="#b0b0b0" stroke-width="1.3"/><line x1="11.5" y1="0.5" x2="11.5" y2="8.5" stroke="#b0b0b0" stroke-width="1.3"/><line x1="14.3" y1="1.7" x2="8.7" y2="7.3" stroke="#b0b0b0" stroke-width="1.3"/></svg>
<svg class="a" style="left:549.0px;top:56.0px;" width="16" height="16" viewBox="0 0 16 16"><path d="M1 6.5h10M2 9.5h10M2 12.5h10M4 15h6" stroke="#9a9a9a" stroke-width="1.6"/><line x1="7.5" y1="4.5" x2="15.5" y2="4.5" stroke="#b0b0b0" stroke-width="1.3"/><line x1="8.7" y1="1.7" x2="14.3" y2="7.3" stroke="#b0b0b0" stroke-width="1.3"/><line x1="11.5" y1="0.5" x2="11.5" y2="8.5" stroke="#b0b0b0" stroke-width="1.3"/><line x1="14.3" y1="1.7" x2="8.7" y2="7.3" stroke="#b0b0b0" stroke-width="1.3"/></svg>
<div style="left:570px;top:54px;width:1px;height:21px;border-left:1px dotted #999;"></div>
<svg class="a" style="left:577.0px;top:56.0px;" width="16" height="16" viewBox="0 0 16 16"><path d="M1 3v7c0 2 7 2 7 0v-7z" fill="#a0a0a0"/><ellipse cx="4.5" cy="3" rx="3.5" ry="1.6" fill="#c4c4c4"/><path d="M15 15c0-4-1-5-5-5m2-2.5l-2.5 2.5 2.5 2.5" fill="none" stroke="#999" stroke-width="1.5"/></svg>
<div style="left:600px;top:54px;width:1px;height:21px;border-left:1px dotted #999;"></div>
<svg class="a" style="left:606.0px;top:56.0px;" width="16" height="16" viewBox="0 0 16 16"><path d="M0 1.500h6l2 1.500h8v2.500h-16zM0 6.500h6l2 1.500h8v2.500h-16zM0 11.500h6l2 1.500h8v2.500h-16z" fill="#6e6e6e"/></svg>
<svg class="a" style="left:630.5px;top:55.5px;" width="15" height="15" viewBox="0 0 15 15"><rect x=".5" y=".5" width="14" height="14" fill="#fff" stroke="#2a3ad8"/><rect x="1" y="1" width="13" height="4.500" fill="#3a4ae0"/><path d="M2 1.500h4l-2 2.500z" fill="#fff"/><rect x="1" y="12" width="13" height="2.500" fill="#5a6ae8"/><path d="M2.500 9.500h11M2.800 7.500v4" stroke="#111" stroke-width="1.200"/></svg>
<svg class="a" style="left:654.5px;top:55.5px;" width="15" height="15" viewBox="0 0 15 15"><rect x="0" y="2" width="15" height="5.600" fill="#2a3ad8"/><rect x="0" y="8.400" width="15" height="5.600" fill="#2a3ad8"/><path d="M1.500 3l2.500 2-2.500 2zM1.500 9l2.500 2-2.500 2z" fill="#fff"/></svg>
<div style="left:676px;top:53px;width:22px;height:22px;background:#fff;border:1px solid #3a62d8;border-radius:2px;"></div>
<svg class="a" style="left:679.0px;top:56.0px;" width="16" height="16" viewBox="0 0 16 16"><path d="M2 2.500h11a2.500 2.500 0 0 1 2.500 2.500v4a2.500 2.500 0 0 1-2.500 2.500h-4l-4 3.500 1-3.500h-4a2.500 2.500 0 0 1-1-2.500v-4a2.500 2.500 0 0 1 1-2.500z" fill="#fff" stroke="#3a5ad8" stroke-width="1.2"/><circle cx="5" cy="7" r="1" fill="#1a1f4a"/><circle cx="8" cy="7" r="1" fill="#1a1f4a"/><circle cx="11" cy="7" r="1" fill="#1a1f4a"/></svg>
<svg class="a" style="left:702.0px;top:56.0px;" width="16" height="16" viewBox="0 0 16 16"><path d="M1 3.500l3-3h11v6h-11zM1 11.500l3-3h11v6h-11z" fill="#6a2ad8" stroke="#3a168a" stroke-width=".8"/><path d="M7 2v3M9.500 2h2.500v3h-2.500zM6 10.500h7M6 12.500h7" stroke="#fff" fill="none" stroke-width="1"/><path d="M0 3.500h3M0 11.500h3" stroke="#3a168a"/></svg>
<svg class="a" style="left:722px;top:59px;" width="8" height="11" viewBox="0 0 8 11"><path d="M4 0v6M1 3.500l3 3.500 3-3.500zM0 10h8" fill="#000" stroke="#000" stroke-width="1.6"/></svg>
<svg class="a" style="left:737.0px;top:56.0px;" width="16" height="16" viewBox="0 0 16 16"><path d="M5 1h9a2 2 0 0 1 2 2v3a2 2 0 0 1-2 2h-7l-3 2 1-2a2 2 0 0 1-2-2v-3a2 2 0 0 1 2-2z" fill="#d8d8d8" stroke="#555" stroke-width=".8"/><circle cx="7" cy="4.500" r=".9"/><circle cx="9.500" cy="4.500" r=".9"/><circle cx="12" cy="4.500" r=".9"/><path d="M1 12l3-3h10v6h-10z" fill="#2a2a2a"/><path d="M0 12h3" stroke="#2a2a2a"/><path d="M6 11h6M6 13h6" stroke="#fff" stroke-width=".8"/></svg>
<svg class="a" style="left:757px;top:59px;" width="8" height="11" viewBox="0 0 8 11"><path d="M4 0v6M1 3.500l3 3.500 3-3.500zM0 10h8" fill="#000" stroke="#000" stroke-width="1.6"/></svg>
<svg class="a" style="left:772.0px;top:56.0px;" width="16" height="16" viewBox="0 0 16 16"><path d="M1 0v7M1 3.500h3l2-2.500M4 3.500l2 2.500M15 0v7M15 3.500h-3l-2-2.500M12 3.500l-2 2.500" fill="none" stroke="#1d3ad0" stroke-width="1.5"/><path d="M3 12l3-3h9v6h-9z" fill="#6a2ad8" stroke="#3a168a" stroke-width=".8"/><path d="M8 11h5M8 13h5" stroke="#fff" stroke-width=".9"/><path d="M1 12h3" stroke="#3a168a"/></svg>
<svg class="a" style="left:792px;top:59px;" width="8" height="11" viewBox="0 0 8 11"><path d="M4 0v6M1 3.500l3 3.500 3-3.500zM0 10h8" fill="#000" stroke="#000" stroke-width="1.6"/></svg>
<div style="left:805px;top:53px;width:22px;height:22px;background:#fff;border:1px solid #3a62d8;border-radius:2px;"></div>
<svg class="a" style="left:807.5px;top:55.5px;" width="17" height="17" viewBox="0 0 17 17"><path d="M1 1h3.500v3.500h-3.500zM1 6.500h3.500v3.500h-3.500zM1 12h3.500v3.500h-3.500z" fill="#fff" stroke="#2a4ad0" stroke-width="1.1"/><path d="M11 0l1.700 3.800 4 .4-3 2.800.9 4-3.600-2.100-3.600 2.100.9-4-3-2.800 4-.4z" fill="#f9d838" stroke="#c79a1a" stroke-width=".7"/><path d="M14 12v2.500h-6m2-2l-2.200 2 2.200 2" fill="none" stroke="#1a1f4a" stroke-width="1.5"/></svg>
<div style="left:830px;top:54px;width:1px;height:21px;border-left:1px dotted #999;"></div>
<svg class="a" style="left:837.0px;top:56.0px;" width="16" height="16" viewBox="0 0 16 16"><path d="M6 2c-5 3-5 9 0 12" fill="none" stroke="#1a2a6a" stroke-width="2.600"/><path d="M3.500 4l4-4 .5 6z" fill="#1a2a6a"/><g transform="translate(12,4.500)"><circle r="4.200" fill="#e82a2a"/><circle r="3.700" fill="none" stroke="#fff" stroke-opacity=".3"/><path d="M-1.500 -1.500l3 3M1.500 -1.500l-3 3" stroke="#fff" stroke-width="1.3"/></g></svg>
<svg class="a" style="left:861.0px;top:56.0px;" width="16" height="16" viewBox="0 0 16 16"><path d="M6 2c-5 3-5 9 0 12" fill="none" stroke="#1a2a6a" stroke-width="2.600"/><path d="M3.500 12l4 4 .5-6z" fill="#1a2a6a"/><g transform="translate(12,11.500)"><circle r="4.200" fill="#e82a2a"/><circle r="3.700" fill="none" stroke="#fff" stroke-opacity=".3"/><path d="M-1.500 -1.500l3 3M1.500 -1.500l-3 3" stroke="#fff" stroke-width="1.3"/></g></svg>
<svg class="a" style="left:885.0px;top:56.0px;" width="16" height="16" viewBox="0 0 16 16"><path d="M4 1h7l4 4.500-4 4.500h-7z" fill="#2a3a5a"/><path d="M0 3.500h4M0 7.500h4" stroke="#2a3a5a" stroke-width="1.500"/><path d="M7 3l3.500 2.500-3.500 2.500z" fill="#fff"/><path d="M5 11l3.500 3.500 6-7" fill="none" stroke="#1fa02a" stroke-width="2.600"/></svg>
<div style="left:907px;top:54px;width:1px;height:21px;border-left:1px dotted #999;"></div>
<svg class="a" style="left:913.0px;top:56.0px;" width="16" height="16" viewBox="0 0 16 16"><circle cx="9.500" cy="5" r="3.800" fill="#eee" stroke="#999" stroke-width="1.500"/><path d="M12.500 8l3 3.500" stroke="#999" stroke-width="2"/><circle cx="5" cy="11.500" r="4" fill="#b0b0b0"/><path d="M5 7.500a4 4 0 0 1 0 8z" fill="#d8d8d8"/></svg>
<svg class="a" style="left:937.0px;top:56.0px;" width="16" height="16" viewBox="0 0 16 16"><rect x="0.7" y="2" width="5" height="4" rx="1" fill="#fff" stroke="#1a2a6a" stroke-width="1.400"/><rect x="8" y="2" width="5" height="4" rx="1" fill="#fff" stroke="#1a2a6a" stroke-width="1.400"/><path d="M5.700 3.500h2.300M13 3.500l2.500 1" stroke="#1a2a6a" stroke-width="1.200"/><path d="M7.500 9.500l7 3-7 3z" fill="#2aca4a"/></svg>
<svg class="a" style="left:1662px;top:55px;" width="17" height="17" viewBox="0 0 17 17"><rect x=".5" y="1.500" width="13" height="12" fill="#fff" stroke="#8a92d0"/><rect x="1" y="2" width="12" height="3" fill="#c8d0f0"/><path d="M1 8h12M1 11h8" stroke="#c8a030" stroke-width="1"/><circle cx="13" cy="10" r="2" fill="#1a2a6a"/><path d="M10 16c0-4 6-4 6 0z" fill="#1a2a6a"/></svg>
<div class="hd" style="left:292px;top:98px;width:1385px;height:20px;border-top:1px solid #b4b4b4;border-bottom:1px solid #f8f8f8;"></div>
<div style="left:292px;top:116px;width:1385px;height:1px;background:#a8a8a8;"></div>
<div style="left:336px;top:99px;width:169px;height:17px;background:linear-gradient(#f2f6fb,#dfe7f1 50%,#d3deeb 55%,#e4ebf4);"></div>
<div style="left:1138px;top:99px;width:230px;height:17px;background:linear-gradient(#bfe4fa,#7ccaf5 50%,#5bbdf2 55%,#a5dbf8);"></div>
<div style="left:316px;top:99px;width:1px;height:17px;background:#a6a6a6;"></div>
<div style="left:336px;top:99px;width:1px;height:17px;background:#a6a6a6;"></div>
<div style="left:505px;top:99px;width:1px;height:17px;background:#a6a6a6;"></div>
<div style="left:625px;top:99px;width:1px;height:17px;background:#a6a6a6;"></div>
<div style="left:725px;top:99px;width:1px;height:17px;background:#a6a6a6;"></div>
<div style="left:805px;top:99px;width:1px;height:17px;background:#a6a6a6;"></div>
<div style="left:885px;top:99px;width:1px;height:17px;background:#a6a6a6;"></div>
<div style="left:935px;top:99px;width:1px;height:17px;background:#a6a6a6;"></div>
<div style="left:1005px;top:99px;width:1px;height:17px;background:#a6a6a6;"></div>
<div style="left:1075px;top:99px;width:1px;height:17px;background:#a6a6a6;"></div>
<div style="left:1138px;top:99px;width:1px;height:17px;background:#a6a6a6;"></div>
<div style="left:1368px;top:99px;width:1px;height:17px;background:#a6a6a6;"></div>
<span class="t" style="left:339px;top:100.0px;font-size:12px;line-height:16px;color:#000;letter-spacing:-0.252px;">Name</span>
<span class="t" style="left:509px;top:100.0px;font-size:12px;line-height:16px;color:#000;letter-spacing:-0.129px;">Datentyp</span>
<span class="t" style="left:629px;top:100.0px;font-size:12px;line-height:16px;color:#000;letter-spacing:-0.063px;">Defaultwert</span>
<span class="t" style="left:729px;top:100.0px;font-size:12px;line-height:16px;color:#000;letter-spacing:-0.504px;">Remanenz</span>
<span class="t" style="left:809px;top:100.0px;font-size:12px;line-height:16px;color:#000;letter-spacing:-0.145px;">Erreichbar a..</span>
<span class="t" style="left:889px;top:100.0px;font-size:12px;line-height:16px;color:#000;letter-spacing:-0.335px;">Schrei...</span>
<span class="t" style="left:939px;top:100.0px;font-size:12px;line-height:16px;color:#000;letter-spacing:-0.156px;">Sichtbar i...</span>
<span class="t" style="left:1009px;top:100.0px;font-size:12px;line-height:16px;color:#000;letter-spacing:-0.113px;">Einstellwert</span>
<span class="t" style="left:1079px;top:100.0px;font-size:12px;line-height:16px;color:#000;letter-spacing:-0.224px;">Überwac..</span>
<span class="t" style="left:1142px;top:100.0px;font-size:12px;line-height:16px;color:#000;letter-spacing:0.109px;">Kommentar</span>
<div class="hd" style="left:1677px;top:98px;width:17px;height:20px;border-top:1px solid #b4b4b4;border-bottom:1px solid #a0a0a0;border-left:1px solid #a6a6a6;"></div>
<div style="left:292px;top:118px;width:1385px;height:19px;background:#e0e0e0;"></div>
<div style="left:292px;top:118px;width:24px;height:19px;background:#d8d8d8;"></div>
<div style="left:292px;top:136px;width:1385px;height:1px;background:#f4f4f4;"></div>
<div style="left:316px;top:118px;width:1px;height:19px;background:#f4f4f4;"></div>
<div style="left:336px;top:118px;width:1px;height:19px;background:#f4f4f4;"></div>
<div style="left:505px;top:118px;width:1px;height:19px;background:#f4f4f4;"></div>
<div style="left:625px;top:118px;width:1px;height:19px;background:#f4f4f4;"></div>
<div style="left:725px;top:118px;width:1px;height:19px;background:#f4f4f4;"></div>
<div style="left:805px;top:118px;width:1px;height:19px;background:#f4f4f4;"></div>
<div style="left:885px;top:118px;width:1px;height:19px;background:#f4f4f4;"></div>
<div style="left:935px;top:118px;width:1px;height:19px;background:#f4f4f4;"></div>
<div style="left:1005px;top:118px;width:1px;height:19px;background:#f4f4f4;"></div>
<div style="left:1075px;top:118px;width:1px;height:19px;background:#f4f4f4;"></div>
<div style="left:1138px;top:118px;width:1px;height:19px;background:#f4f4f4;"></div>
<div style="left:1368px;top:118px;width:1px;height:19px;background:#f4f4f4;"></div>
<span class="t" style="left:296px;top:120.0px;font-size:12px;line-height:16px;color:#555;">1</span>
<svg class="a" style="left:319px;top:122px;" width="16" height="11" viewBox="0 0 16 11"><path d="M0 5.500l4-4h11v8h-11z" fill="#2a8ad8" stroke="#145a9a" stroke-width=".8"/><path d="M6 3.500v4M8.500 3.500h3v4h-3z" fill="none" stroke="#fff" stroke-width="1.200"/><circle cx="3.500" cy="5.500" r=".8" fill="#fff"/></svg>
<div style="left:838px;top:119px;width:15px;height:15px;background:linear-gradient(#fdfdfd 40%,#e4e4e4);border:1px solid #b4b4b4;border-radius:2.500px;"></div>
<div style="left:903px;top:119px;width:15px;height:15px;background:linear-gradient(#fdfdfd 40%,#e4e4e4);border:1px solid #b4b4b4;border-radius:2.500px;"></div>
<div style="left:963px;top:119px;width:15px;height:15px;background:linear-gradient(#fdfdfd 40%,#e4e4e4);border:1px solid #b4b4b4;border-radius:2.500px;"></div>
<div style="left:1033px;top:119px;width:15px;height:15px;background:linear-gradient(#fdfdfd 40%,#e4e4e4);border:1px solid #b4b4b4;border-radius:2.500px;"></div>
<div style="left:292px;top:137px;width:1385px;height:19px;background:#e0e0e0;"></div>
<div style="left:292px;top:137px;width:24px;height:19px;background:#c5ccd6;"></div>
<div style="left:292px;top:155px;width:1385px;height:1px;background:#f4f4f4;"></div>
<div style="left:316px;top:137px;width:1px;height:19px;background:#f4f4f4;"></div>
<div style="left:336px;top:137px;width:1px;height:19px;background:#f4f4f4;"></div>
<div style="left:505px;top:137px;width:1px;height:19px;background:#f4f4f4;"></div>
<div style="left:625px;top:137px;width:1px;height:19px;background:#f4f4f4;"></div>
<div style="left:725px;top:137px;width:1px;height:19px;background:#f4f4f4;"></div>
<div style="left:805px;top:137px;width:1px;height:19px;background:#f4f4f4;"></div>
<div style="left:885px;top:137px;width:1px;height:19px;background:#f4f4f4;"></div>
<div style="left:935px;top:137px;width:1px;height:19px;background:#f4f4f4;"></div>
<div style="left:1005px;top:137px;width:1px;height:19px;background:#f4f4f4;"></div>
<div style="left:1075px;top:137px;width:1px;height:19px;background:#f4f4f4;"></div>
<div style="left:1138px;top:137px;width:1px;height:19px;background:#f4f4f4;"></div>
<div style="left:1368px;top:137px;width:1px;height:19px;background:#f4f4f4;"></div>
<span class="t" style="left:296px;top:139.0px;font-size:12px;line-height:16px;color:#555;">2</span>
<svg class="a" style="left:319px;top:141px;" width="16" height="11" viewBox="0 0 16 11"><path d="M0 5.500l4-4h11v8h-11z" fill="#2a8ad8" stroke="#145a9a" stroke-width=".8"/><path d="M6 3.500v4M8.500 3.500h3v4h-3z" fill="none" stroke="#fff" stroke-width="1.200"/><circle cx="3.500" cy="5.500" r=".8" fill="#fff"/></svg>
<div style="left:838px;top:138px;width:15px;height:15px;background:linear-gradient(#fdfdfd 40%,#e4e4e4);border:1px solid #b4b4b4;border-radius:2.500px;"></div>
<div style="left:903px;top:138px;width:15px;height:15px;background:linear-gradient(#fdfdfd 40%,#e4e4e4);border:1px solid #b4b4b4;border-radius:2.500px;"></div>
<div style="left:963px;top:138px;width:15px;height:15px;background:linear-gradient(#fdfdfd 40%,#e4e4e4);border:1px solid #b4b4b4;border-radius:2.500px;"></div>
<div style="left:1033px;top:138px;width:15px;height:15px;background:linear-gradient(#fdfdfd 40%,#e4e4e4);border:1px solid #b4b4b4;border-radius:2.500px;"></div>
<div style="left:292px;top:156px;width:1385px;height:19px;background:#e0e0e0;"></div>
<div style="left:292px;top:156px;width:24px;height:19px;background:#d8d8d8;"></div>
<div style="left:292px;top:174px;width:1385px;height:1px;background:#f4f4f4;"></div>
<div style="left:316px;top:156px;width:1px;height:19px;background:#f4f4f4;"></div>
<div style="left:336px;top:156px;width:1px;height:19px;background:#f4f4f4;"></div>
<div style="left:505px;top:156px;width:1px;height:19px;background:#f4f4f4;"></div>
<div style="left:625px;top:156px;width:1px;height:19px;background:#f4f4f4;"></div>
<div style="left:725px;top:156px;width:1px;height:19px;background:#f4f4f4;"></div>
<div style="left:805px;top:156px;width:1px;height:19px;background:#f4f4f4;"></div>
<div style="left:885px;top:156px;width:1px;height:19px;background:#f4f4f4;"></div>
<div style="left:935px;top:156px;width:1px;height:19px;background:#f4f4f4;"></div>
<div style="left:1005px;top:156px;width:1px;height:19px;background:#f4f4f4;"></div>
<div style="left:1075px;top:156px;width:1px;height:19px;background:#f4f4f4;"></div>
<div style="left:1138px;top:156px;width:1px;height:19px;background:#f4f4f4;"></div>
<div style="left:1368px;top:156px;width:1px;height:19px;background:#f4f4f4;"></div>
<span class="t" style="left:296px;top:158.0px;font-size:12px;line-height:16px;color:#555;">3</span>
<svg class="a" style="left:319px;top:160px;" width="16" height="11" viewBox="0 0 16 11"><path d="M0 5.500l4-4h11v8h-11z" fill="#2a8ad8" stroke="#145a9a" stroke-width=".8"/><path d="M6 3.500v4M8.500 3.500h3v4h-3z" fill="none" stroke="#fff" stroke-width="1.200"/><circle cx="3.500" cy="5.500" r=".8" fill="#fff"/></svg>
<div style="left:838px;top:157px;width:15px;height:15px;background:linear-gradient(#fdfdfd 40%,#e4e4e4);border:1px solid #b4b4b4;border-radius:2.500px;"></div>
<div style="left:903px;top:157px;width:15px;height:15px;background:linear-gradient(#fdfdfd 40%,#e4e4e4);border:1px solid #b4b4b4;border-radius:2.500px;"></div>
<div style="left:963px;top:157px;width:15px;height:15px;background:linear-gradient(#fdfdfd 40%,#e4e4e4);border:1px solid #b4b4b4;border-radius:2.500px;"></div>
<div style="left:1033px;top:157px;width:15px;height:15px;background:linear-gradient(#fdfdfd 40%,#e4e4e4);border:1px solid #b4b4b4;border-radius:2.500px;"></div>
<div style="left:336px;top:136px;width:170px;height:20px;background:#e4e6ea;border:1px solid #b8c4d4;"></div>
<svg class="a" style="left:340px;top:125px;" width="9" height="6" viewBox="0 0 9 6"><path d="M0 0h9l-4.5 5z" fill="#000"/></svg>
<span class="t" style="left:359px;top:120.0px;font-size:12px;line-height:16px;color:#000;letter-spacing:0.262px;">Input</span>
<div style="left:342px;top:144px;width:4px;height:4px;background:#2a3ad0;"></div>
<span class="t" style="left:377px;top:139.0px;font-size:12px;line-height:16px;color:#000;letter-spacing:-0.834px;">OFF_SQ</span>
<span class="t" style="left:510px;top:139.0px;font-size:12px;line-height:16px;color:#000;letter-spacing:-0.004px;">Bool</span>
<span class="t" style="left:630px;top:139.0px;font-size:12px;line-height:16px;color:#000;letter-spacing:-0.069px;">false</span>
<span class="t" style="left:730px;top:139.0px;font-size:12px;line-height:16px;color:#000;letter-spacing:-0.032px;">Nicht re...</span>
<span class="t" style="left:1143px;top:139.0px;font-size:12px;line-height:16px;color:#000;letter-spacing:0.212px;">Kette ausschalten</span>
<div style="left:342px;top:163px;width:4px;height:4px;background:#2a3ad0;"></div>
<span class="t" style="left:377px;top:158.0px;font-size:12px;line-height:16px;color:#000;letter-spacing:-0.811px;">INIT_SQ</span>
<span class="t" style="left:510px;top:158.0px;font-size:12px;line-height:16px;color:#000;letter-spacing:-0.004px;">Bool</span>
<span class="t" style="left:630px;top:158.0px;font-size:12px;line-height:16px;color:#000;letter-spacing:-0.069px;">false</span>
<span class="t" style="left:730px;top:158.0px;font-size:12px;line-height:16px;color:#000;letter-spacing:0.153px;">Nicht rema...</span>
<span class="t" style="left:1143px;top:158.0px;font-size:12px;line-height:16px;color:#000;letter-spacing:0.139px;">Kette in Initialzustand versetzen</span>
<div style="left:787px;top:137px;width:18px;height:18px;background:#ebebeb;border:1px solid #8a8a8a;"></div>
<svg class="a" style="left:792px;top:144px;" width="8" height="5" viewBox="0 0 8 5"><path d="M0 0h8l-4 4.500z" fill="#808080"/></svg>
<div style="left:292px;top:175px;width:1385px;height:2px;background:#e0e0e0;"></div>
<div style="left:292px;top:175px;width:24px;height:2px;background:#d8d8d8;"></div>
<div style="left:316px;top:175px;width:1px;height:2px;background:#f4f4f4;"></div>
<div style="left:336px;top:175px;width:1px;height:2px;background:#f4f4f4;"></div>
<div style="left:505px;top:175px;width:1px;height:2px;background:#f4f4f4;"></div>
<div style="left:625px;top:175px;width:1px;height:2px;background:#f4f4f4;"></div>
<div style="left:725px;top:175px;width:1px;height:2px;background:#f4f4f4;"></div>
<div style="left:805px;top:175px;width:1px;height:2px;background:#f4f4f4;"></div>
<div style="left:885px;top:175px;width:1px;height:2px;background:#f4f4f4;"></div>
<div style="left:935px;top:175px;width:1px;height:2px;background:#f4f4f4;"></div>
<div style="left:1005px;top:175px;width:1px;height:2px;background:#f4f4f4;"></div>
<div style="left:1075px;top:175px;width:1px;height:2px;background:#f4f4f4;"></div>
<div style="left:1138px;top:175px;width:1px;height:2px;background:#f4f4f4;"></div>
<div style="left:1368px;top:175px;width:1px;height:2px;background:#f4f4f4;"></div>
<div style="left:838px;top:176px;width:14px;height:1px;background:#b8b8b8;"></div>
<div style="left:903px;top:176px;width:14px;height:1px;background:#b8b8b8;"></div>
<div style="left:963px;top:176px;width:14px;height:1px;background:#b8b8b8;"></div>
<div style="left:1033px;top:176px;width:14px;height:1px;background:#b8b8b8;"></div>
<div style="left:1677px;top:118px;width:17px;height:59px;background:#b9b9b9;"></div>
<div class="btn" style="left:1677px;top:118px;width:17px;height:17px;"></div>
<svg class="a" style="left:1685.5px;top:126.5px;" width="1" height="1" viewBox="0 0 1 1"><path d="M-4 2l4-4 4 4" fill="none" stroke="#444" stroke-width="1.8"/></svg>
<div class="btn" style="left:1677px;top:159px;width:17px;height:17px;"></div>
<svg class="a" style="left:1685.5px;top:167.5px;" width="1" height="1" viewBox="0 0 1 1"><path d="M-4 -2l4 4 4-4" fill="none" stroke="#444" stroke-width="1.8"/></svg>
<div class="sb" style="left:1677px;top:137px;width:17px;height:6px;"></div>
<div style="left:292px;top:177px;width:1402px;height:1px;background:#a8a8a8;"></div>
<div style="left:292px;top:178px;width:1402px;height:5px;background:#dcdcdc;"></div>
<div style="left:292px;top:183px;width:1402px;height:1px;background:#fafafa;"></div>
<div style="left:292px;top:184px;width:1402px;height:1px;background:#a0a0a0;"></div>
<div style="left:964px;top:178px;width:24px;height:5px;background:linear-gradient(#b4b4b4,#dadada);border-left:1px solid #909090;border-right:1px solid #909090;"></div>
<div style="left:998px;top:178px;width:24px;height:5px;background:linear-gradient(#b4b4b4,#dadada);border-left:1px solid #909090;border-right:1px solid #909090;"></div>
<svg class="a" style="left:974px;top:179px;" width="6" height="3" viewBox="0 0 6 3"><path d="M0 3h6l-3-3z" fill="#000"/></svg>
<svg class="a" style="left:1008px;top:179px;" width="6" height="3" viewBox="0 0 6 3"><path d="M0 0h6l-3 3z" fill="#000"/></svg>
<div style="left:292px;top:185px;width:201px;height:839px;background:#f0f0f0;"></div>
<div style="left:292px;top:185px;width:200px;height:25px;background:#aeaeae;"></div>
<span class="t" style="left:296px;top:188.0px;font-size:14px;line-height:18px;color:#fff;letter-spacing:0.285px;">Navigation</span>
<svg class="a" style="left:419px;top:188px;" width="16" height="16" viewBox="0 0 16 16"><path d="M9.500 9.500l5 5.500" stroke="#d8a020" stroke-width="3"/><path d="M11 11.500l3.500 4" stroke="#4a62b0" stroke-width="2.400"/><circle cx="6" cy="6" r="5.200" fill="#f4f4f4" stroke="#14144a" stroke-width="1.400"/><path d="M3 6h6" stroke="#14144a" stroke-width="1.800"/><path d="M6 3v6" stroke="#14144a" stroke-width="1.800"/></svg>
<svg class="a" style="left:443px;top:188px;" width="16" height="16" viewBox="0 0 16 16"><path d="M9.500 9.500l5 5.500" stroke="#d8a020" stroke-width="3"/><path d="M11 11.500l3.500 4" stroke="#4a62b0" stroke-width="2.400"/><circle cx="6" cy="6" r="5.200" fill="#f4f4f4" stroke="#14144a" stroke-width="1.400"/><path d="M3 6h6" stroke="#14144a" stroke-width="1.800"/></svg>
<div style="left:464px;top:185px;width:22px;height:22px;background:#fff;border:1px solid #3a62d8;border-radius:1px;"></div>
<svg class="a" style="left:467px;top:188px;" width="15" height="15" viewBox="0 0 15 15"><rect x="0" y="0" width="7.500" height="14" fill="#d8d8d8"/><rect x="7.500" y="0" width="7" height="14" fill="#e6eaff"/><path d="M0 14.500h14.500v-14" fill="none" stroke="#a0a8e0"/><path d="M7.500 0v14" stroke="#3a52e0" stroke-width="1"/><path d="M2.500 7.500h10M5 5l-2.500 2.500 2.500 2.500M10 5l2.500 2.500-2.500 2.500" fill="none" stroke="#2a42d8" stroke-width="1.700"/></svg>
<div class="hd" style="left:292px;top:210px;width:200px;height:21px;border-top:1px solid #fff;border-bottom:1px solid #9a9a9a;"></div>
<div style="left:312px;top:211px;width:1px;height:19px;background:#8a8a8a;"></div>
<svg class="a" style="left:298px;top:215.5px;" width="8" height="10" viewBox="0 0 8 10"><path d="M1.5 1l4 4-4 4" fill="none" stroke="#000" stroke-width="2"/></svg>
<span class="t" style="left:317px;top:211.5px;font-size:14px;line-height:18px;color:#000;-webkit-text-stroke:0.5px #000;letter-spacing:0.274px;">Vorausgeschaltete perm...</span>
<div class="hd" style="left:292px;top:232px;width:200px;height:23px;border-top:1px solid #fff;border-bottom:1px solid #9a9a9a;"></div>
<div style="left:312px;top:233px;width:1px;height:21px;background:#8a8a8a;"></div>
<svg class="a" style="left:297px;top:239.5px;" width="10" height="8" viewBox="0 0 10 8"><path d="M1 1.5l4 4 4-4" fill="none" stroke="#000" stroke-width="2"/></svg>
<span class="t" style="left:337px;top:234.5px;font-size:14px;line-height:18px;color:#000;-webkit-text-stroke:0.5px #000;letter-spacing:0.253px;">Ketten (1)</span>
<svg class="a" style="left:316px;top:235px;" width="16" height="16" viewBox="0 0 16 16"><circle cx="8" cy="8" r="7.500" fill="#e8242a"/><circle cx="8" cy="8" r="7" fill="none" stroke="#fff" stroke-opacity=".35"/><path d="M4.500 4.500l7 7M11.500 4.500l-7 7" stroke="#fff" stroke-width="2.600"/></svg>
<div style="left:292px;top:255px;width:183px;height:707px;background:#f0f0f0;"></div>
<div style="left:307px;top:855px;width:93px;height:73px;background:#fff;border:1px solid #c8c8c8;border-right:none;"></div>
<div style="left:399px;top:889px;width:76px;height:39px;background:#fff;border-top:1px solid #c8c8c8;border-bottom:1px solid #c8c8c8;"></div>
<div style="left:399px;top:855px;width:1px;height:35px;background:#c8c8c8;"></div>
<div style="left:349.5px;top:255px;width:1px;height:707px;background:#000;"></div>
<div style="left:320px;top:255px;width:60px;height:4px;background:#dcdce8;"></div>
<div style="left:343px;top:269px;width:14px;height:2px;background:#000;"></div>
<span class="t" style="left:360px;top:259.0px;font-size:9px;line-height:13px;color:#009090;letter-spacing:0.300px;-webkit-text-stroke:0.25px #009090;">T7</span>
<span class="t" style="left:360px;top:267.0px;font-size:9px;line-height:13px;color:#000;letter-spacing:-0.019px;">Trans_...</span>
<div style="left:343px;top:317px;width:14px;height:2px;background:#000;"></div>
<span class="t" style="left:360px;top:307.0px;font-size:9px;line-height:13px;color:#009090;letter-spacing:0.300px;-webkit-text-stroke:0.25px #009090;">T8</span>
<span class="t" style="left:360px;top:315.0px;font-size:9px;line-height:13px;color:#000;letter-spacing:-0.019px;">Trans_...</span>
<div style="left:343px;top:365px;width:14px;height:2px;background:#000;"></div>
<span class="t" style="left:360px;top:355.0px;font-size:9px;line-height:13px;color:#009090;letter-spacing:0.300px;-webkit-text-stroke:0.25px #009090;">T9</span>
<span class="t" style="left:360px;top:363.0px;font-size:9px;line-height:13px;color:#000;letter-spacing:-0.019px;">Trans_...</span>
<div style="left:343px;top:413px;width:14px;height:2px;background:#000;"></div>
<span class="t" style="left:360px;top:403.0px;font-size:9px;line-height:13px;color:#009090;letter-spacing:0.300px;-webkit-text-stroke:0.25px #009090;">T10</span>
<span class="t" style="left:360px;top:411.0px;font-size:9px;line-height:13px;color:#000;letter-spacing:-0.019px;">Trans_...</span>
<div style="left:343px;top:461px;width:14px;height:2px;background:#000;"></div>
<span class="t" style="left:360px;top:451.0px;font-size:9px;line-height:13px;color:#009090;letter-spacing:0.300px;-webkit-text-stroke:0.25px #009090;">T11</span>
<span class="t" style="left:360px;top:459.0px;font-size:9px;line-height:13px;color:#000;letter-spacing:-0.002px;">Trans_P...</span>
<div style="left:343px;top:509px;width:14px;height:2px;background:#000;"></div>
<span class="t" style="left:360px;top:499.0px;font-size:9px;line-height:13px;color:#009090;letter-spacing:0.300px;-webkit-text-stroke:0.25px #009090;">T12</span>
<span class="t" style="left:360px;top:507.0px;font-size:9px;line-height:13px;color:#000;letter-spacing:-0.002px;">Trans_P...</span>
<div style="left:343px;top:557px;width:14px;height:2px;background:#000;"></div>
<span class="t" style="left:360px;top:547.0px;font-size:9px;line-height:13px;color:#009090;letter-spacing:0.300px;-webkit-text-stroke:0.25px #009090;">T13</span>
<span class="t" style="left:360px;top:555.0px;font-size:9px;line-height:13px;color:#000;letter-spacing:-0.002px;">Trans_P...</span>
<div style="left:343px;top:605px;width:14px;height:2px;background:#000;"></div>
<span class="t" style="left:360px;top:595.0px;font-size:9px;line-height:13px;color:#009090;letter-spacing:0.300px;-webkit-text-stroke:0.25px #009090;">T42</span>
<span class="t" style="left:360px;top:603.0px;font-size:9px;line-height:13px;color:#000;letter-spacing:-0.002px;">Trans_P...</span>
<div style="left:343px;top:653px;width:14px;height:2px;background:#000;"></div>
<span class="t" style="left:360px;top:643.0px;font-size:9px;line-height:13px;color:#009090;letter-spacing:0.300px;-webkit-text-stroke:0.25px #009090;">T14</span>
<span class="t" style="left:360px;top:651.0px;font-size:9px;line-height:13px;color:#000;letter-spacing:-0.002px;">Trans_P...</span>
<div style="left:343px;top:701px;width:14px;height:2px;background:#000;"></div>
<span class="t" style="left:360px;top:691.0px;font-size:9px;line-height:13px;color:#009090;letter-spacing:0.300px;-webkit-text-stroke:0.25px #009090;">T15</span>
<span class="t" style="left:360px;top:699.0px;font-size:9px;line-height:13px;color:#000;letter-spacing:-0.019px;">Trans_...</span>
<div style="left:343px;top:749px;width:14px;height:2px;background:#000;"></div>
<span class="t" style="left:360px;top:739.0px;font-size:9px;line-height:13px;color:#009090;letter-spacing:0.300px;-webkit-text-stroke:0.25px #009090;">T16</span>
<span class="t" style="left:360px;top:747.0px;font-size:9px;line-height:13px;color:#000;letter-spacing:-0.118px;">Trans_B...</span>
<div style="left:343px;top:797px;width:14px;height:2px;background:#000;"></div>
<span class="t" style="left:360px;top:787.0px;font-size:9px;line-height:13px;color:#009090;letter-spacing:0.300px;-webkit-text-stroke:0.25px #009090;">T43</span>
<span class="t" style="left:360px;top:795.0px;font-size:9px;line-height:13px;color:#000;letter-spacing:-0.167px;">Trans_R...</span>
<div style="left:343px;top:845px;width:14px;height:2px;background:#000;"></div>
<span class="t" style="left:360px;top:835.0px;font-size:9px;line-height:13px;color:#009090;letter-spacing:0.300px;-webkit-text-stroke:0.25px #009090;">T44</span>
<span class="t" style="left:360px;top:843.0px;font-size:9px;line-height:13px;color:#000;letter-spacing:-0.118px;">Trans_B...</span>
<div style="left:320px;top:283px;width:60px;height:24px;background:#dcdce8;"></div>
<span class="t" style="left:350px;top:282.5px;font-size:9px;line-height:13px;color:#009090;letter-spacing:0.300px;transform:translateX(-50%);-webkit-text-stroke:0.25px #009090;">S8</span>
<span class="t" style="left:350px;top:291.5px;font-size:9px;line-height:13px;color:#000;letter-spacing:0.247px;transform:translateX(-50%);">Bandlauf_...</span>
<div style="left:320px;top:331px;width:60px;height:24px;background:#dcdce8;"></div>
<span class="t" style="left:350px;top:330.5px;font-size:9px;line-height:13px;color:#009090;letter-spacing:0.300px;transform:translateX(-50%);-webkit-text-stroke:0.25px #009090;">S9</span>
<span class="t" style="left:350px;top:339.5px;font-size:9px;line-height:13px;color:#000;letter-spacing:-0.201px;transform:translateX(-50%);">Greifer_zu</span>
<div style="left:320px;top:379px;width:60px;height:24px;background:#dcdce8;"></div>
<span class="t" style="left:350px;top:378.5px;font-size:9px;line-height:13px;color:#009090;letter-spacing:0.300px;transform:translateX(-50%);-webkit-text-stroke:0.25px #009090;">S10</span>
<span class="t" style="left:350px;top:387.5px;font-size:9px;line-height:13px;color:#000;letter-spacing:-0.252px;transform:translateX(-50%);">PuP_Decke...</span>
<div style="left:320px;top:427px;width:60px;height:24px;background:#dcdce8;"></div>
<span class="t" style="left:350px;top:426.5px;font-size:9px;line-height:13px;color:#009090;letter-spacing:0.300px;transform:translateX(-50%);-webkit-text-stroke:0.25px #009090;">S11</span>
<span class="t" style="left:350px;top:435.5px;font-size:9px;line-height:13px;color:#000;letter-spacing:-0.127px;transform:translateX(-50%);">PuP_vert_...</span>
<div style="left:320px;top:475px;width:60px;height:24px;background:#dcdce8;"></div>
<span class="t" style="left:350px;top:474.5px;font-size:9px;line-height:13px;color:#009090;letter-spacing:0.300px;transform:translateX(-50%);-webkit-text-stroke:0.25px #009090;">S12</span>
<span class="t" style="left:350px;top:483.5px;font-size:9px;line-height:13px;color:#000;letter-spacing:-0.230px;transform:translateX(-50%);">PuP_hor_vor</span>
<div style="left:320px;top:523px;width:60px;height:24px;background:#dcdce8;"></div>
<span class="t" style="left:350px;top:522.5px;font-size:9px;line-height:13px;color:#009090;letter-spacing:0.300px;transform:translateX(-50%);-webkit-text-stroke:0.25px #009090;">S13</span>
<span class="t" style="left:350px;top:531.5px;font-size:9px;line-height:13px;color:#000;letter-spacing:-0.127px;transform:translateX(-50%);">PuP_ver_r...</span>
<div style="left:320px;top:571px;width:60px;height:24px;background:#dcdce8;"></div>
<span class="t" style="left:350px;top:570.5px;font-size:9px;line-height:13px;color:#009090;letter-spacing:0.300px;transform:translateX(-50%);-webkit-text-stroke:0.25px #009090;">S14</span>
<span class="t" style="left:350px;top:579.5px;font-size:9px;line-height:13px;color:#000;letter-spacing:-0.043px;transform:translateX(-50%);">PuP_zurüc...</span>
<div style="left:320px;top:619px;width:60px;height:24px;background:#dcdce8;"></div>
<span class="t" style="left:350px;top:618.5px;font-size:9px;line-height:13px;color:#009090;letter-spacing:0.300px;transform:translateX(-50%);-webkit-text-stroke:0.25px #009090;">S37</span>
<span class="t" style="left:350px;top:627.5px;font-size:9px;line-height:13px;color:#000;letter-spacing:-0.043px;transform:translateX(-50%);">PuP_zurüc...</span>
<div style="left:320px;top:667px;width:60px;height:24px;background:#dcdce8;"></div>
<span class="t" style="left:350px;top:666.5px;font-size:9px;line-height:13px;color:#009090;letter-spacing:0.300px;transform:translateX(-50%);-webkit-text-stroke:0.25px #009090;">S15</span>
<span class="t" style="left:350px;top:675.5px;font-size:9px;line-height:13px;color:#000;letter-spacing:-0.002px;transform:translateX(-50%);">Greifer_auf</span>
<div style="left:320px;top:715px;width:60px;height:24px;background:#dcdce8;"></div>
<span class="t" style="left:350px;top:714.5px;font-size:9px;line-height:13px;color:#009090;letter-spacing:0.300px;transform:translateX(-50%);-webkit-text-stroke:0.25px #009090;">S16</span>
<span class="t" style="left:350px;top:723.5px;font-size:9px;line-height:13px;color:#000;letter-spacing:0.247px;transform:translateX(-50%);">Bandlauf_...</span>
<div style="left:320px;top:763px;width:60px;height:24px;background:#dcdce8;"></div>
<span class="t" style="left:350px;top:762.5px;font-size:9px;line-height:13px;color:#009090;letter-spacing:0.300px;transform:translateX(-50%);-webkit-text-stroke:0.25px #009090;">S38</span>
<span class="t" style="left:350px;top:771.5px;font-size:9px;line-height:13px;color:#000;letter-spacing:-0.384px;transform:translateX(-50%);">RFID_Write</span>
<div style="left:320px;top:811px;width:60px;height:24px;background:#dcdce8;"></div>
<span class="t" style="left:350px;top:810.5px;font-size:9px;line-height:13px;color:#009090;letter-spacing:0.300px;transform:translateX(-50%);-webkit-text-stroke:0.25px #009090;">S39</span>
<span class="t" style="left:350px;top:819.5px;font-size:9px;line-height:13px;color:#000;letter-spacing:0.247px;transform:translateX(-50%);">Bandlauf_...</span>
<div style="left:320px;top:859px;width:60px;height:24px;background:#dcdce8;"></div>
<span class="t" style="left:350px;top:858.5px;font-size:9px;line-height:13px;color:#009090;letter-spacing:0.300px;transform:translateX(-50%);-webkit-text-stroke:0.25px #009090;">S40</span>
<span class="t" style="left:350px;top:867.5px;font-size:9px;line-height:13px;color:#000;letter-spacing:-0.613px;transform:translateX(-50%);">RFID_Read</span>
<div style="left:350px;top:895px;width:97px;height:1px;background:#000;"></div>
<div style="left:446px;top:895px;width:1px;height:46px;background:#000;"></div>
<div style="left:343px;top:917px;width:14px;height:2px;background:#000;"></div>
<span class="t" style="left:360px;top:907.0px;font-size:9px;line-height:13px;color:#009090;letter-spacing:0.300px;-webkit-text-stroke:0.25px #009090;">T45</span>
<span class="t" style="left:360px;top:915.0px;font-size:9px;line-height:13px;color:#000;letter-spacing:-0.019px;">Trans_...</span>
<div style="left:439px;top:917px;width:14px;height:2px;background:#000;"></div>
<span class="t" style="left:456px;top:907.0px;font-size:9px;line-height:13px;color:#009090;letter-spacing:0.300px;">T46</span>
<span class="t" style="left:456px;top:915.0px;font-size:9px;line-height:13px;color:#000;letter-spacing:-0.042px;">Tran</span>
<svg class="a" style="left:441px;top:932px;" width="11" height="10" viewBox="0 0 11 10"><path d="M1 1l4.500 4 4.500-4M1 4.500l4.500 4 4.500-4" fill="none" stroke="#000" stroke-width="1"/></svg>
<svg class="a" style="left:438px;top:907px;" width="17" height="28" viewBox="0 0 17 28"><path d="M6.500 0h4v8h6v4h-6v14h-4v-14h-6v-4h6z" fill="#fff" stroke="#555" stroke-width=".7"/></svg>
<div style="left:446px;top:907px;width:1px;height:30px;background:#000;"></div>
<div style="left:439px;top:917px;width:14px;height:2px;background:#000;"></div>
<div style="left:320px;top:931px;width:60px;height:24px;background:#dcdce8;"></div>
<span class="t" style="left:350px;top:930.5px;font-size:9px;line-height:13px;color:#009090;letter-spacing:0.300px;transform:translateX(-50%);-webkit-text-stroke:0.25px #009090;">S29</span>
<span class="t" style="left:350px;top:939.5px;font-size:9px;line-height:13px;color:#000;letter-spacing:-0.348px;transform:translateX(-50%);">Dose_zur_R...</span>
<span class="t" style="left:360px;top:955.5px;font-size:9px;line-height:13px;color:#009090;">T31</span>
<div style="left:292px;top:960px;width:183px;height:2px;background:#f0f0f0;"></div>
<div style="left:474px;top:255px;width:18px;height:706px;background:#c2c2c2;"></div>
<div class="btn" style="left:474px;top:255px;width:18px;height:17px;"></div>
<svg class="a" style="left:483.0px;top:263.5px;" width="1" height="1" viewBox="0 0 1 1"><path d="M-4 2l4-4 4 4" fill="none" stroke="#444" stroke-width="1.8"/></svg>
<div class="btn" style="left:474px;top:944px;width:18px;height:17px;"></div>
<svg class="a" style="left:483.0px;top:952.5px;" width="1" height="1" viewBox="0 0 1 1"><path d="M-4 -2l4 4 4-4" fill="none" stroke="#444" stroke-width="1.8"/></svg>
<div class="sb" style="left:474px;top:494px;width:18px;height:421px;"></div>
<svg class="a" style="left:478px;top:701px;" width="9" height="8" viewBox="0 0 9 8"><path d="M0 .5h9M0 2.5h9M0 4.5h9M0 6.5h9" stroke="#555" stroke-width="1"/></svg>
<div style="left:293px;top:961px;width:199px;height:17px;background:#c2c2c2;"></div>
<div class="btn" style="left:293px;top:961px;width:17px;height:17px;"></div>
<svg class="a" style="left:301.5px;top:969.5px;" width="1" height="1" viewBox="0 0 1 1"><path d="M2 -4l-4 4 4 4" fill="none" stroke="#444" stroke-width="1.8"/></svg>
<div class="btn" style="left:458px;top:961px;width:17px;height:17px;"></div>
<svg class="a" style="left:466.5px;top:969.5px;" width="1" height="1" viewBox="0 0 1 1"><path d="M-2 -4l4 4-4 4" fill="none" stroke="#444" stroke-width="1.8"/></svg>
<div class="sbh" style="left:312px;top:961px;width:93px;height:17px;"></div>
<svg class="a" style="left:354.5px;top:965px;" width="8" height="9" viewBox="0 0 8 9"><path d="M.5 0v9M2.5 0v9M4.5 0v9M6.5 0v9" stroke="#555" stroke-width="1"/></svg>
<div class="hd" style="left:292px;top:978px;width:200px;height:22px;border-top:1px solid #fff;border-bottom:1px solid #9a9a9a;"></div>
<div style="left:312px;top:979px;width:1px;height:20px;background:#8a8a8a;"></div>
<svg class="a" style="left:298px;top:984.0px;" width="8" height="10" viewBox="0 0 8 10"><path d="M1.5 1l4 4-4 4" fill="none" stroke="#000" stroke-width="2"/></svg>
<span class="t" style="left:317px;top:980.0px;font-size:14px;line-height:18px;color:#000;-webkit-text-stroke:0.5px #000;letter-spacing:0.268px;">Nachgeschaltete perman...</span>
<div class="hd" style="left:292px;top:1001px;width:200px;height:23px;border-top:1px solid #fff;border-bottom:1px solid #9a9a9a;"></div>
<div style="left:312px;top:1002px;width:1px;height:21px;background:#8a8a8a;"></div>
<svg class="a" style="left:298px;top:1007.5px;" width="8" height="10" viewBox="0 0 8 10"><path d="M1.5 1l4 4-4 4" fill="none" stroke="#000" stroke-width="2"/></svg>
<span class="t" style="left:317px;top:1003.5px;font-size:14px;line-height:18px;color:#000;-webkit-text-stroke:0.5px #000;letter-spacing:0.303px;">Meldungen</span>
<div style="left:492px;top:185px;width:8px;height:839px;background:#d4d4d4;border-left:1px solid #9c9c9c;border-right:1px solid #9c9c9c;"></div>
<div style="left:494px;top:185px;width:3px;height:839px;background:#e6e6e6;"></div>
<div style="left:493px;top:577px;width:6px;height:25px;background:#e8e8e8;border-top:1px solid #999;border-bottom:1px solid #999;"></div>
<div style="left:493px;top:611px;width:6px;height:24px;background:#e8e8e8;border-top:1px solid #999;border-bottom:1px solid #999;"></div>
<svg class="a" style="left:494px;top:586px;" width="4" height="7" viewBox="0 0 4 7"><path d="M4 0v7l-4-3.500z" fill="#000"/></svg>
<svg class="a" style="left:495px;top:620px;" width="4" height="7" viewBox="0 0 4 7"><path d="M0 0v7l4-3.500z" fill="#000"/></svg>
<div style="left:500px;top:185px;width:1194px;height:823px;background:#fff;"></div>
<div style="left:500px;top:185px;width:1194px;height:38px;background:#ebebeb;"></div>
<div style="left:502px;top:187px;width:32px;height:32px;background:#fff;"></div>
<span class="t" style="left:518px;top:196.5px;font-size:9px;line-height:13px;color:#14144a;letter-spacing:0.497px;transform:translateX(-50%);-webkit-text-stroke:0.2px #14144a;">&amp;</span>
<div style="left:536px;top:187px;width:32px;height:32px;background:#fff;"></div>
<span class="t" style="left:552px;top:196.5px;font-size:9px;line-height:13px;color:#14144a;letter-spacing:-0.303px;transform:translateX(-50%);-webkit-text-stroke:0.2px #14144a;">&gt; = 1</span>
<div style="left:570px;top:187px;width:32px;height:32px;background:#fff;"></div>
<div style="left:604px;top:187px;width:32px;height:32px;background:#fff;"></div>
<div style="left:638px;top:187px;width:32px;height:32px;background:#fff;"></div>
<div style="left:672px;top:187px;width:32px;height:32px;background:#fff;"></div>
<div style="left:706px;top:187px;width:32px;height:32px;background:#fff;"></div>
<div style="left:740px;top:187px;width:32px;height:32px;background:#fff;"></div>
<span class="t" style="left:756px;top:196.8px;font-size:8.5px;line-height:12.5px;color:#14144a;letter-spacing:-0.542px;transform:translateX(-50%);-webkit-text-stroke:0.2px #14144a;">CMP &gt;T</span>
<div style="left:774px;top:187px;width:32px;height:32px;background:#fff;"></div>
<span class="t" style="left:790px;top:196.8px;font-size:8.5px;line-height:12.5px;color:#14144a;letter-spacing:-0.318px;transform:translateX(-50%);-webkit-text-stroke:0.2px #14144a;">CMP&gt;U</span>
<div style="left:808px;top:187px;width:32px;height:32px;background:#fff;"></div>
<span class="t" style="left:824px;top:196.8px;font-size:8.5px;line-height:12.5px;color:#14144a;letter-spacing:-0.264px;transform:translateX(-50%);-webkit-text-stroke:0.2px #14144a;">CONV</span>
<div style="left:842px;top:187px;width:32px;height:32px;background:#fff;"></div>
<span class="t" style="left:858px;top:196.8px;font-size:8.5px;line-height:12.5px;color:#14144a;letter-spacing:-0.540px;transform:translateX(-50%);-webkit-text-stroke:0.2px #14144a;">NEG</span>
<div style="left:876px;top:187px;width:32px;height:32px;background:#fff;"></div>
<span class="t" style="left:892px;top:196.8px;font-size:8.5px;line-height:12.5px;color:#14144a;letter-spacing:-0.381px;transform:translateX(-50%);-webkit-text-stroke:0.2px #14144a;">NOT</span>
<div style="left:910px;top:187px;width:32px;height:32px;background:#fff;"></div>
<span class="t" style="left:926px;top:196.8px;font-size:8.5px;line-height:12.5px;color:#14144a;letter-spacing:-0.779px;transform:translateX(-50%);-webkit-text-stroke:0.2px #14144a;">SWAP</span>
<div style="left:944px;top:187px;width:32px;height:32px;background:#fff;"></div>
<span class="t" style="left:960px;top:191.9px;font-size:8.5px;line-height:12.5px;color:#14144a;letter-spacing:-0.372px;transform:translateX(-50%);-webkit-text-stroke:0.2px #14144a;">CMP &gt;</span>
<span class="t" style="left:960px;top:201.2px;font-size:8.5px;line-height:12.5px;color:#14144a;letter-spacing:-0.827px;transform:translateX(-50%);-webkit-text-stroke:0.2px #14144a;">T_MAX</span>
<div style="left:978px;top:187px;width:32px;height:32px;background:#fff;"></div>
<span class="t" style="left:994px;top:191.9px;font-size:8.5px;line-height:12.5px;color:#14144a;letter-spacing:-0.372px;transform:translateX(-50%);-webkit-text-stroke:0.2px #14144a;">CMP &gt;</span>
<span class="t" style="left:994px;top:201.2px;font-size:8.5px;line-height:12.5px;color:#14144a;letter-spacing:-1.046px;transform:translateX(-50%);-webkit-text-stroke:0.2px #14144a;">T_WARN</span>
<svg class="a" style="left:577px;top:194px;" width="18" height="18" viewBox="0 0 18 18"><rect x="3" y="3" width="13" height="13" fill="#fff" stroke="#14144a" stroke-width="1.400"/><path d="M.5 6.500h2.500M16 6.500h2.500" stroke="#14144a" stroke-width="1.400"/></svg>
<span class="t" style="left:586.5px;top:197.0px;font-size:9px;line-height:13px;color:#14144a;transform:translateX(-50%);-webkit-text-stroke:0.2px #14144a;">??</span>
<svg class="a" style="left:615px;top:198px;" width="10" height="10" viewBox="0 0 10 10"><path d="M1 5h7M8.500 1.500v7.500" stroke="#14144a" stroke-width="2" fill="none"/></svg>
<svg class="a" style="left:643px;top:198px;" width="19" height="10" viewBox="0 0 19 10"><path d="M1 5h8M17.500 1.500v7.500" stroke="#14144a" stroke-width="2" fill="none"/><circle cx="12.500" cy="5.800" r="2.100" fill="none" stroke="#14144a" stroke-width="1.500"/></svg>
<svg class="a" style="left:677px;top:196px;" width="22" height="14" viewBox="0 0 22 14"><path d="M0 7h5M8.500 1.500h-3v11.500h3M16.500 1.500h3v11.500h-3" stroke="#14144a" stroke-width="1.800" fill="none"/></svg>
<span class="t" style="left:689.5px;top:196.5px;font-size:9px;line-height:13px;color:#14144a;transform:translateX(-50%);-webkit-text-stroke:0.2px #14144a;">W</span>
<svg class="a" style="left:710px;top:196px;" width="24" height="16" viewBox="0 0 24 16"><path d="M8.500 1.500h9M8.500 3.800h9" stroke="#14144a" stroke-width="1.100" stroke-dasharray="4 1"/><path d="M0 12h8M8 8.500v7M16.500 8.500v7M16.500 12h7.500" stroke="#14144a" stroke-width="2" fill="none"/></svg>
<div style="left:655px;top:277px;width:82px;height:150px;background:#e0e0ea;"></div>
<div style="left:655px;top:277px;width:82px;height:34px;background:#c9cadb;"></div>
<span class="t" style="left:696.0px;top:279.5px;font-size:11px;line-height:15px;color:#000;transform:translateX(-50%);">&lt;</span>
<div style="left:685.0px;top:293px;width:22px;height:16px;border:1px solid #dcdeea;"></div>
<span class="t" style="left:696.0px;top:292.5px;font-size:12px;line-height:16px;color:#000;-webkit-text-stroke:0.5px #000;transform:translateX(-50%);">Int</span>
<span class="t" style="right:1261px;top:330.0px;font-size:12px;line-height:16px;color:#000;letter-spacing:0.086px;">&quot;Data_block_</span>
<span class="t" style="right:1261px;top:344.0px;font-size:12px;line-height:16px;color:#000;letter-spacing:-0.157px;">Ident_Read_</span>
<span class="t" style="right:1261px;top:358.0px;font-size:12px;line-height:16px;color:#000;letter-spacing:0.490px;">optimiert&quot;.</span>
<span class="t" style="right:1261px;top:372.0px;font-size:12px;line-height:16px;color:#000;letter-spacing:0.196px;">Nutzdaten.</span>
<span class="t" style="right:1261px;top:386.0px;font-size:12px;line-height:16px;color:#000;letter-spacing:-0.203px;">Anzahl_MuM</span>
<div style="left:640px;top:398px;width:15px;height:2px;background:#ff9f00;"></div>
<span class="t" style="left:659px;top:392.0px;font-size:12px;line-height:16px;color:#000;letter-spacing:-0.724px;">IN1</span>
<div style="left:640px;top:417px;width:15px;height:2px;background:#ff9f00;"></div>
<span class="t" style="left:659px;top:411.0px;font-size:12px;line-height:16px;color:#000;letter-spacing:-0.724px;">IN2</span>
<span class="t" style="right:1261.5px;top:409.5px;font-size:12px;line-height:16px;color:#4a72dc;letter-spacing:-0.673px;">13</span>
<div style="left:658px;top:408px;width:22px;height:1px;background:#f4f4fa;"></div>
<div style="left:737px;top:417px;width:30px;height:2px;background:#000;"></div>
<div style="left:767px;top:391px;width:82px;height:112px;background:#e0e0ea;"></div>
<div style="left:767px;top:391px;width:82px;height:15px;background:#c9cadb;"></div>
<span class="t" style="left:808.0px;top:391.5px;font-size:12px;line-height:16px;color:#000;-webkit-text-stroke:0.5px #000;transform:translateX(-50%);">&amp;</span>
<span class="t" style="right:1149px;top:455.0px;font-size:12px;line-height:16px;color:#000;letter-spacing:-0.256px;">&quot;Read_Write_</span>
<span class="t" style="right:1149px;top:469.0px;font-size:12px;line-height:16px;color:#000;letter-spacing:-0.770px;">RFID_DB&quot;.</span>
<span class="t" style="right:1149px;top:483.0px;font-size:12px;line-height:16px;color:#000;letter-spacing:-0.385px;">ReaDone</span>
<div style="left:752px;top:493px;width:15px;height:2px;background:#000;"></div>
<svg class="a" style="left:771.0px;top:489.0px;" width="9" height="9" viewBox="0 0 9 9"><line x1="-0.1" y1="4.5" x2="9.1" y2="4.5" stroke="#3a4a8a" stroke-width="2.2" stroke-opacity=".55"/><line x1="1.2" y1="1.2" x2="7.8" y2="7.8" stroke="#3a4a8a" stroke-width="2.2" stroke-opacity=".55"/><line x1="4.5" y1="-0.1" x2="4.5" y2="9.1" stroke="#3a4a8a" stroke-width="2.2" stroke-opacity=".55"/><line x1="7.8" y1="1.2" x2="1.2" y2="7.8" stroke="#3a4a8a" stroke-width="2.2" stroke-opacity=".55"/><line x1="0.0" y1="4.5" x2="9.0" y2="4.5" stroke="#fff200" stroke-width="1.3"/><line x1="1.3" y1="1.3" x2="7.7" y2="7.7" stroke="#fff200" stroke-width="1.3"/><line x1="4.5" y1="0.0" x2="4.5" y2="9.0" stroke="#fff200" stroke-width="1.3"/><line x1="7.7" y1="1.3" x2="1.3" y2="7.7" stroke="#fff200" stroke-width="1.3"/></svg>
<div style="left:510px;top:223px;width:712px;height:20px;background:#d9d9d9;"></div>
<svg class="a" style="left:515px;top:229px;" width="9" height="6" viewBox="0 0 9 6"><path d="M0 0h9l-4.5 5z" fill="#000"/></svg>
<span class="t" style="left:533px;top:223.5px;font-size:14px;line-height:18px;color:#000;-webkit-text-stroke:0.5px #000;letter-spacing:0.497px;">T45:</span>
<span class="t" style="left:570px;top:224.5px;font-size:12px;line-height:16px;color:#000;letter-spacing:-0.132px;">Trans_weniger_als_13_MuMs</span>
<span class="t" style="left:543px;top:243.0px;font-size:12px;line-height:16px;color:#9696a4;letter-spacing:0.331px;">Kommentar</span>
<div style="left:539px;top:243px;width:1px;height:20px;background:#e8e8e8;"></div>
<div style="left:849px;top:493px;width:39px;height:2px;background:#000;"></div>
<div style="left:887px;top:467px;width:2px;height:36px;background:#000;"></div>
<div style="left:890px;top:491px;width:369px;height:2px;border-top:2px dotted #000;"></div>
<div style="left:655px;top:623px;width:82px;height:150px;background:#e0e0ea;"></div>
<div style="left:655px;top:623px;width:82px;height:34px;background:#c9cadb;"></div>
<span class="t" style="left:696.0px;top:625.5px;font-size:11px;line-height:15px;color:#000;transform:translateX(-50%);">&gt;=</span>
<div style="left:685.0px;top:639px;width:22px;height:16px;border:1px solid #dcdeea;"></div>
<span class="t" style="left:696.0px;top:638.5px;font-size:12px;line-height:16px;color:#000;-webkit-text-stroke:0.5px #000;transform:translateX(-50%);">Int</span>
<span class="t" style="right:1261px;top:676.0px;font-size:12px;line-height:16px;color:#000;letter-spacing:0.086px;">&quot;Data_block_</span>
<span class="t" style="right:1261px;top:690.0px;font-size:12px;line-height:16px;color:#000;letter-spacing:-0.157px;">Ident_Read_</span>
<span class="t" style="right:1261px;top:704.0px;font-size:12px;line-height:16px;color:#000;letter-spacing:0.490px;">optimiert&quot;.</span>
<span class="t" style="right:1261px;top:718.0px;font-size:12px;line-height:16px;color:#000;letter-spacing:0.196px;">Nutzdaten.</span>
<span class="t" style="right:1261px;top:732.0px;font-size:12px;line-height:16px;color:#000;letter-spacing:-0.203px;">Anzahl_MuM</span>
<div style="left:640px;top:744px;width:15px;height:2px;background:#ff9f00;"></div>
<span class="t" style="left:659px;top:738.0px;font-size:12px;line-height:16px;color:#000;letter-spacing:-0.724px;">IN1</span>
<div style="left:640px;top:763px;width:15px;height:2px;background:#ff9f00;"></div>
<span class="t" style="left:659px;top:757.0px;font-size:12px;line-height:16px;color:#000;letter-spacing:-0.724px;">IN2</span>
<span class="t" style="right:1261.5px;top:755.5px;font-size:12px;line-height:16px;color:#4a72dc;letter-spacing:-0.673px;">13</span>
<div style="left:658px;top:754px;width:22px;height:1px;background:#f4f4fa;"></div>
<div style="left:737px;top:763px;width:30px;height:2px;background:#000;"></div>
<div style="left:767px;top:737px;width:82px;height:112px;background:#e0e0ea;"></div>
<div style="left:767px;top:737px;width:82px;height:15px;background:#c9cadb;"></div>
<span class="t" style="left:808.0px;top:737.5px;font-size:12px;line-height:16px;color:#000;-webkit-text-stroke:0.5px #000;transform:translateX(-50%);">&amp;</span>
<span class="t" style="right:1149px;top:801.0px;font-size:12px;line-height:16px;color:#000;letter-spacing:-0.256px;">&quot;Read_Write_</span>
<span class="t" style="right:1149px;top:815.0px;font-size:12px;line-height:16px;color:#000;letter-spacing:-0.770px;">RFID_DB&quot;.</span>
<span class="t" style="right:1149px;top:829.0px;font-size:12px;line-height:16px;color:#000;letter-spacing:-0.385px;">ReaDone</span>
<div style="left:752px;top:839px;width:15px;height:2px;background:#000;"></div>
<svg class="a" style="left:771.0px;top:835.0px;" width="9" height="9" viewBox="0 0 9 9"><line x1="-0.1" y1="4.5" x2="9.1" y2="4.5" stroke="#3a4a8a" stroke-width="2.2" stroke-opacity=".55"/><line x1="1.2" y1="1.2" x2="7.8" y2="7.8" stroke="#3a4a8a" stroke-width="2.2" stroke-opacity=".55"/><line x1="4.5" y1="-0.1" x2="4.5" y2="9.1" stroke="#3a4a8a" stroke-width="2.2" stroke-opacity=".55"/><line x1="7.8" y1="1.2" x2="1.2" y2="7.8" stroke="#3a4a8a" stroke-width="2.2" stroke-opacity=".55"/><line x1="0.0" y1="4.5" x2="9.0" y2="4.5" stroke="#fff200" stroke-width="1.3"/><line x1="1.3" y1="1.3" x2="7.7" y2="7.7" stroke="#fff200" stroke-width="1.3"/><line x1="4.5" y1="0.0" x2="4.5" y2="9.0" stroke="#fff200" stroke-width="1.3"/><line x1="7.7" y1="1.3" x2="1.3" y2="7.7" stroke="#fff200" stroke-width="1.3"/></svg>
<div style="left:510px;top:568px;width:712px;height:20px;background:#d9d9d9;"></div>
<svg class="a" style="left:515px;top:574px;" width="9" height="6" viewBox="0 0 9 6"><path d="M0 0h9l-4.5 5z" fill="#000"/></svg>
<span class="t" style="left:533px;top:568.5px;font-size:14px;line-height:18px;color:#000;-webkit-text-stroke:0.5px #000;letter-spacing:0.497px;">T46:</span>
<span class="t" style="left:570px;top:569.5px;font-size:12px;line-height:16px;color:#000;letter-spacing:-0.164px;">Trans_mehr_als_13_MuMs</span>
<div style="left:542px;top:591px;width:1px;height:13px;background:#000;"></div>
<div style="left:849px;top:839px;width:30px;height:2px;background:#000;"></div>
<div style="left:879px;top:813px;width:82px;height:131px;background:#e0e0ea;"></div>
<div style="left:879px;top:813px;width:82px;height:15px;background:#c9cadb;"></div>
<span class="t" style="left:920.0px;top:813.5px;font-size:12px;line-height:16px;color:#000;-webkit-text-stroke:0.5px #000;transform:translateX(-50%);">&gt;=1</span>
<div style="left:767px;top:870px;width:82px;height:74px;background:#e0e0ea;"></div>
<div style="left:767px;top:870px;width:82px;height:34px;background:#c9cadb;"></div>
<span class="t" style="left:808.0px;top:872.5px;font-size:11px;line-height:15px;color:#000;transform:translateX(-50%);">&gt;</span>
<div style="left:792.0px;top:886px;width:32px;height:16px;border:1px solid #dcdeea;"></div>
<span class="t" style="left:808.0px;top:885.5px;font-size:12px;line-height:16px;color:#000;-webkit-text-stroke:0.5px #000;transform:translateX(-50%);">Time</span>
<div style="left:752px;top:915px;width:15px;height:2px;background:#ff9f00;"></div>
<span class="t" style="left:771px;top:909.0px;font-size:12px;line-height:16px;color:#000;letter-spacing:-0.724px;">IN1</span>
<span class="t" style="right:1149.5px;top:907.5px;font-size:12px;line-height:16px;color:#000;letter-spacing:-0.724px;">#RFID_Read.T</span>
<div style="left:752px;top:934px;width:15px;height:2px;background:#ff9f00;"></div>
<span class="t" style="left:771px;top:928.0px;font-size:12px;line-height:16px;color:#000;letter-spacing:-0.724px;">IN2</span>
<span class="t" style="right:1149.5px;top:926.5px;font-size:12px;line-height:16px;color:#4a72dc;letter-spacing:0.580px;">t#5s</span>
<div style="left:770px;top:925px;width:22px;height:1px;background:#f4f4fa;"></div>
<div style="left:849px;top:934px;width:30px;height:2px;background:#000;"></div>
<svg class="a" style="left:882.5px;top:930.5px;" width="9" height="9" viewBox="0 0 9 9"><line x1="-0.1" y1="4.5" x2="9.1" y2="4.5" stroke="#3a4a8a" stroke-width="2.2" stroke-opacity=".55"/><line x1="1.2" y1="1.2" x2="7.8" y2="7.8" stroke="#3a4a8a" stroke-width="2.2" stroke-opacity=".55"/><line x1="4.5" y1="-0.1" x2="4.5" y2="9.1" stroke="#3a4a8a" stroke-width="2.2" stroke-opacity=".55"/><line x1="7.8" y1="1.2" x2="1.2" y2="7.8" stroke="#3a4a8a" stroke-width="2.2" stroke-opacity=".55"/><line x1="0.0" y1="4.5" x2="9.0" y2="4.5" stroke="#fff200" stroke-width="1.3"/><line x1="1.3" y1="1.3" x2="7.7" y2="7.7" stroke="#fff200" stroke-width="1.3"/><line x1="4.5" y1="0.0" x2="4.5" y2="9.0" stroke="#fff200" stroke-width="1.3"/><line x1="7.7" y1="1.3" x2="1.3" y2="7.7" stroke="#fff200" stroke-width="1.3"/></svg>
<div style="left:961px;top:934px;width:39px;height:2px;background:#000;"></div>
<div style="left:999px;top:908px;width:2px;height:36px;background:#000;"></div>
<div style="left:1002px;top:932px;width:377px;height:2px;border-top:2px dotted #000;"></div>
<div style="left:1271px;top:223px;width:2px;height:295px;background:#000;"></div>
<div style="left:1259px;top:491px;width:26px;height:3px;background:#000;"></div>
<span class="t" style="left:1288px;top:480.8px;font-size:10.5px;line-height:14.5px;color:#009090;letter-spacing:-0.364px;">T45</span>
<span class="t" style="left:1288px;top:494.0px;font-size:12px;line-height:16px;color:#000;letter-spacing:-0.161px;">Trans_wenig...</span>
<div style="left:1242px;top:518px;width:60px;height:16px;background:#e0e0ea;"></div>
<span class="t" style="left:1243px;top:518.0px;font-size:12px;line-height:16px;color:#000;letter-spacing:-0.245px;">Dose_zur...</span>
<span class="t" style="left:1303px;top:519.5px;font-size:11px;line-height:15px;color:#009090;letter-spacing:0.043px;">S29</span>
<div style="left:1391px;top:223px;width:2px;height:733px;background:#000;"></div>
<div style="left:1379px;top:932px;width:26px;height:3px;background:#000;"></div>
<svg class="a" style="left:1386px;top:948px;" width="12" height="12" viewBox="0 0 12 12"><path d="M1 1l5 5 5-5M1 5.500l5 5 5-5" fill="none" stroke="#000" stroke-width="1.600"/></svg>
<span class="t" style="left:1407.5px;top:921.8px;font-size:10.5px;line-height:14.5px;color:#009090;letter-spacing:-0.364px;">T46</span>
<span class="t" style="left:1407.5px;top:935.0px;font-size:12px;line-height:16px;color:#000;letter-spacing:-0.210px;">Trans_mehr_als_13_MuMs</span>
<div style="left:1676px;top:223px;width:18px;height:785px;background:#c2c2c2;"></div>
<div class="btn" style="left:1676px;top:223px;width:18px;height:17px;"></div>
<svg class="a" style="left:1685.0px;top:231.5px;" width="1" height="1" viewBox="0 0 1 1"><path d="M-4 2l4-4 4 4" fill="none" stroke="#444" stroke-width="1.8"/></svg>
<div class="btn" style="left:1676px;top:991px;width:18px;height:17px;"></div>
<svg class="a" style="left:1685.0px;top:999.5px;" width="1" height="1" viewBox="0 0 1 1"><path d="M-4 -2l4 4 4-4" fill="none" stroke="#444" stroke-width="1.8"/></svg>
<div class="sb" style="left:1676px;top:478px;width:18px;height:511px;"></div>
<svg class="a" style="left:1680px;top:729px;" width="9" height="8" viewBox="0 0 9 8"><path d="M0 .5h9M0 2.5h9M0 4.5h9M0 6.5h9" stroke="#555" stroke-width="1"/></svg>
<div style="left:493px;top:1008px;width:1201px;height:19px;background:#ebebeb;"></div>
<div style="left:1436px;top:1009px;width:155px;height:18px;background:#fff;border:1px solid #8a8a8a;"></div>
<span class="t" style="left:1441px;top:1011.0px;font-size:12px;line-height:16px;color:#000;letter-spacing:-0.673px;">100%</span>
<div style="left:1576px;top:1010px;width:14px;height:16px;background:#f0f0f0;border:1px solid #8a8a8a;"></div>
<svg class="a" style="left:1579px;top:1015px;" width="8" height="5" viewBox="0 0 8 5"><path d="M0 0h8l-4 4.500z" fill="#000"/></svg>
<svg class="a" style="left:1610px;top:1023px;" width="67" height="3" viewBox="0 0 67 3"><rect x="0" y="0" width="1" height="3" fill="#222"/><rect x="3" y="0" width="1" height="3" fill="#222"/><rect x="6" y="0" width="1" height="3" fill="#222"/><rect x="9" y="0" width="1" height="3" fill="#222"/><rect x="12" y="0" width="1" height="3" fill="#222"/><rect x="15" y="0" width="1" height="3" fill="#222"/><rect x="18" y="0" width="1" height="3" fill="#222"/><rect x="21" y="0" width="1" height="3" fill="#222"/><rect x="24" y="0" width="1" height="3" fill="#222"/><rect x="27" y="0" width="1" height="3" fill="#222"/><rect x="30" y="0" width="1" height="3" fill="#222"/><rect x="33" y="0" width="1" height="3" fill="#222"/><rect x="36" y="0" width="1" height="3" fill="#222"/><rect x="39" y="0" width="1" height="3" fill="#222"/><rect x="42" y="0" width="1" height="3" fill="#222"/><rect x="45" y="0" width="1" height="3" fill="#222"/><rect x="48" y="0" width="1" height="3" fill="#222"/><rect x="51" y="0" width="1" height="3" fill="#222"/><rect x="54" y="0" width="1" height="3" fill="#222"/><rect x="57" y="0" width="1" height="3" fill="#222"/><rect x="60" y="0" width="1" height="3" fill="#222"/><rect x="63" y="0" width="1" height="3" fill="#222"/><rect x="66" y="0" width="1" height="3" fill="#222"/></svg>
<div style="left:1610px;top:1016px;width:66px;height:1px;background:#999;"></div>
<svg class="a" style="left:1637px;top:1012px;" width="8" height="11" viewBox="0 0 8 11"><path d="M.5 .5h7v6.500l-3.500 3.500-3.500-3.500z" fill="#f4f4f4" stroke="#888"/></svg>
<div style="left:292px;top:1024px;width:201px;height:3px;background:#f0f0f0;"></div>
<div style="left:292px;top:1027px;width:1402px;height:3px;background:#191e36;"></div>
<div style="left:292px;top:1030px;width:1402px;height:25px;background:#c8c8c8;"></div>
<div style="left:292px;top:1055px;width:1402px;height:2px;background:#191e36;"></div>
<div style="left:1300px;top:1032px;width:137px;height:23px;background:linear-gradient(#f4f4f4,#e4e4e4);border:1px solid #8a8a8a;border-bottom:none;"></div>
<svg class="a" style="left:1302px;top:1035px;" width="16" height="16" viewBox="0 0 16 16"><rect x=".5" y="1.500" width="12" height="12" fill="#eef0ff" stroke="#8a92d0"/><path d="M2 4.500h5M2 7h3M2 9.500h3" stroke="#333"/><circle cx="9" cy="8" r="3.200" fill="#fff" stroke="#333" stroke-width="1.200"/><path d="M11.500 10.500l3 3" stroke="#c9a23a" stroke-width="2"/></svg>
<span class="t" style="left:1320px;top:1035.0px;font-size:14px;line-height:18px;color:#000;-webkit-text-stroke:0.5px #000;letter-spacing:0.329px;">Eigenschaften</span>
<div style="left:1438px;top:1033px;width:75px;height:22px;background:#d4d4d4;border:1px solid #8a8a8a;border-bottom:none;"></div>
<svg class="a" style="left:1440px;top:1035px;" width="18" height="17" viewBox="0 0 18 17"><rect x=".5" y=".5" width="10" height="14" fill="#fff" stroke="#8a92d0"/><path d="M3 1v5M1 3.500h4" stroke="#1a1f4a" stroke-width="1.400"/><path d="M7 4.500h2v7h-2zM5 13h9m-3-3l3 3-3 3" fill="none" stroke="#1a1f4a" stroke-width="1.600"/></svg>
<span class="t" style="left:1460px;top:1035.0px;font-size:14px;line-height:18px;color:#555;-webkit-text-stroke:0.5px #555;letter-spacing:0.662px;">Info</span>
<svg class="a" style="left:1495px;top:1037px;" width="14" height="14" viewBox="0 0 14 14"><rect x=".5" y=".5" width="13" height="13" rx="5" fill="#f5dc1a" stroke="#b8a010"/><path d="M7 3v1.500M7 6v5" stroke="#1a1f4a" stroke-width="2"/></svg>
<div style="left:1515px;top:1033px;width:106px;height:22px;background:#d4d4d4;border:1px solid #8a8a8a;border-bottom:none;"></div>
<svg class="a" style="left:1519px;top:1036px;" width="12" height="15" viewBox="0 0 12 15"><rect x=".5" y=".5" width="11" height="14" fill="#fff" stroke="#8a92d0"/><path d="M3 2.500v3c0 2 4 2 4 0v-3M5 7v2c0 3 4 3 4 0" fill="none" stroke="#1d2a78" stroke-width="1.200"/><circle cx="9" cy="9" r="1.200" fill="#1d2a78"/></svg>
<span class="t" style="left:1537px;top:1035.0px;font-size:14px;line-height:18px;color:#555;-webkit-text-stroke:0.5px #555;letter-spacing:0.231px;">Diagnose</span>
<svg class="a" style="left:1640px;top:1038px;" width="50" height="12" viewBox="0 0 50 12"><rect x="4" y=".8" width="7" height="7" fill="none" stroke="#fff" stroke-width="1.600"/><rect x="0" y="4" width="8" height="8" fill="#fff"/><rect x="19.500" y="1" width="10" height="10" fill="none" stroke="#fff"/><path d="M19.500 4h10M19.500 6.500h10M19.500 9h10" stroke="#fff"/><path d="M36 9l6.500-7 6.500 7z" fill="#fff"/></svg>
<div style="left:1694px;top:0px;width:3px;height:1057px;background:#191e36;"></div>
<div style="left:1697px;top:0px;width:201px;height:1057px;background:#f0f0f0;"></div>
<div style="left:1697px;top:0px;width:201px;height:21px;background:#a8a8a8;"></div>
<span class="t" style="left:1702px;top:1.0px;font-size:14px;line-height:18px;color:#fff;letter-spacing:0.540px;">Anweisungen</span>
<svg class="a" style="left:1843px;top:4px;" width="50" height="13" viewBox="0 0 50 13"><rect x="4" y=".8" width="7" height="7" fill="none" stroke="#fff" stroke-width="1.600"/><rect x="0" y="4" width="8" height="8" fill="#fff"/><rect x="18.500" y=".500" width="9" height="11" fill="none" stroke="#fff"/><path d="M21.500 1v11M24.500 1v11" stroke="#fff"/><path d="M37 0v12l7-6z" fill="#fff"/></svg>
<div style="left:1697px;top:21px;width:201px;height:2px;background:#dcdcdc;"></div>
<div class="hd" style="left:1697px;top:23px;width:201px;height:26px;border-bottom:1px solid #9a9a9a;"></div>
<span class="t" style="left:1702px;top:29.0px;font-size:14px;line-height:18px;color:#000;-webkit-text-stroke:0.5px #000;letter-spacing:0.523px;">Optionen</span>
<div style="left:1697px;top:49px;width:201px;height:29px;background:#ebebeb;"></div>
<div style="left:1703px;top:55px;width:120px;height:17px;background:#fff;border:1px solid #8a8a8a;"></div>
<svg class="a" style="left:1831px;top:55px;" width="5" height="8" viewBox="0 0 5 8"><path d="M0 0v8l5-4z" fill="#000"/></svg>
<svg class="a" style="left:1849px;top:55px;" width="16" height="15" viewBox="0 0 16 15"><rect x=".5" y=".5" width="14" height="13" fill="#fff" stroke="#8a92d0"/><rect x="1" y="1" width="13" height="2.500" fill="#c8d0f0"/><path d="M1 14.500h14" stroke="#a8b0e0"/></svg>
<svg class="a" style="left:1872px;top:55px;" width="16" height="15" viewBox="0 0 16 15"><rect x=".5" y=".5" width="14" height="13" fill="#fff" stroke="#8a92d0"/><rect x="1" y="1" width="13" height="2.500" fill="#c8d0f0"/><path d="M2 5.500h11M2 8h11M2 10.500h11M5.500 4v8M9.500 4v8" stroke="#555" stroke-width=".8"/><path d="M1 14.500h14" stroke="#a8b0e0"/></svg>
<div style="left:1697px;top:78px;width:201px;height:1px;background:#9a9a9a;"></div>
<div class="hd" style="left:1697px;top:79px;width:201px;height:21px;border-top:1px solid #fff;border-bottom:1px solid #9a9a9a;"></div>
<div style="left:1717px;top:80px;width:1px;height:19px;background:#8a8a8a;"></div>
<svg class="a" style="left:1703px;top:84.5px;" width="8" height="10" viewBox="0 0 8 10"><path d="M1.5 1l4 4-4 4" fill="none" stroke="#000" stroke-width="2"/></svg>
<span class="t" style="left:1722px;top:80.5px;font-size:14px;line-height:18px;color:#000;-webkit-text-stroke:0.5px #000;letter-spacing:0.294px;">Favoriten</span>
<div style="left:1697px;top:100px;width:201px;height:3px;background:#c0c0c0;"></div>
<div class="hd" style="left:1697px;top:103px;width:201px;height:21px;border-top:1px solid #fff;border-bottom:1px solid #9a9a9a;"></div>
<div style="left:1717px;top:104px;width:1px;height:19px;background:#8a8a8a;"></div>
<svg class="a" style="left:1702px;top:109.5px;" width="10" height="8" viewBox="0 0 10 8"><path d="M1 1.5l4 4 4-4" fill="none" stroke="#000" stroke-width="2"/></svg>
<span class="t" style="left:1722px;top:104.5px;font-size:14px;line-height:18px;color:#000;-webkit-text-stroke:0.5px #000;letter-spacing:0.317px;">Einfache Anweisungen</span>
<div style="left:1697px;top:125px;width:201px;height:18px;background:linear-gradient(#f2f6fb,#dfe7f1 50%,#d3deeb 55%,#e4ebf4);border-bottom:1px solid #b0b0b0;"></div>
<div class="hd" style="left:1876px;top:125px;width:19px;height:18px;border-left:1px solid #a6a6a6;border-bottom:1px solid #b0b0b0;"></div>
<span class="t" style="left:1700px;top:126.5px;font-size:12px;line-height:16px;color:#000;letter-spacing:-0.252px;">Name</span>
<div style="left:1697px;top:163px;width:179px;height:1px;background:#fff;"></div>
<svg class="a" style="left:1720px;top:151px;" width="9" height="6" viewBox="0 0 9 6"><path d="M0 0h9l-4.5 5z" fill="#000"/></svg>
<svg class="a" style="left:1734px;top:146px;" width="16" height="16" viewBox="0 0 16 16"><defs><linearGradient id="yg" x1="0" y1="0" x2="1" y2="1"><stop offset="0" stop-color="#fff6d0"/><stop offset="1" stop-color="#f4c64a"/></linearGradient></defs><path d="M.5 2.500h5l1.500 1.500h8v10.500h-14.500z" fill="url(#yg)" stroke="#c9a040" stroke-width="1"/><path d="M10.500 6l-4 3.500 4 3.500" fill="none" stroke="#14144a" stroke-width="1.600"/></svg>
<span class="t" style="left:1754px;top:146.0px;font-size:12px;line-height:16px;color:#000;letter-spacing:0.270px;">Vergleicher</span>
<div style="left:1697px;top:182px;width:179px;height:1px;background:#fff;"></div>
<svg class="a" style="left:1752px;top:165px;" width="16" height="16" viewBox="0 0 16 16"><rect x=".5" y=".5" width="14" height="14" fill="#fff" stroke="#a8a8c4"/><rect x="4" y="2.750" width="7.500" height="9.500" fill="#fff" stroke="#14144a" stroke-width="1.500"/><rect x="3.250" y="2" width="9" height="2" fill="#14144a"/><path d="M1.500 5.500h2.500M1.500 8h2.500M1.500 10.500h2.500" stroke="#14144a" stroke-width="1.500"/><rect x="5.800" y="5.800" width="3.700" height="1.800" fill="#14144a"/></svg>
<span class="t" style="left:1772px;top:165.0px;font-size:12px;line-height:16px;color:#000;letter-spacing:-0.800px;">CMP ==</span>
<div style="left:1697px;top:201px;width:179px;height:1px;background:#fff;"></div>
<svg class="a" style="left:1752px;top:184px;" width="16" height="16" viewBox="0 0 16 16"><rect x=".5" y=".5" width="14" height="14" fill="#fff" stroke="#a8a8c4"/><rect x="4" y="2.750" width="7.500" height="9.500" fill="#fff" stroke="#14144a" stroke-width="1.500"/><rect x="3.250" y="2" width="9" height="2" fill="#14144a"/><path d="M1.500 5.500h2.500M1.500 8h2.500M1.500 10.500h2.500" stroke="#14144a" stroke-width="1.500"/><rect x="5.800" y="5.800" width="3.700" height="1.800" fill="#14144a"/></svg>
<span class="t" style="left:1772px;top:184.0px;font-size:12px;line-height:16px;color:#000;letter-spacing:-1.133px;">CMP &lt;&gt;</span>
<div style="left:1697px;top:220px;width:179px;height:1px;background:#fff;"></div>
<svg class="a" style="left:1752px;top:203px;" width="16" height="16" viewBox="0 0 16 16"><rect x=".5" y=".5" width="14" height="14" fill="#fff" stroke="#a8a8c4"/><rect x="4" y="2.750" width="7.500" height="9.500" fill="#fff" stroke="#14144a" stroke-width="1.500"/><rect x="3.250" y="2" width="9" height="2" fill="#14144a"/><path d="M1.500 5.500h2.500M1.500 8h2.500M1.500 10.500h2.500" stroke="#14144a" stroke-width="1.500"/><rect x="5.800" y="5.800" width="3.700" height="1.800" fill="#14144a"/></svg>
<span class="t" style="left:1772px;top:203.0px;font-size:12px;line-height:16px;color:#000;letter-spacing:-1.133px;">CMP &gt;=</span>
<div style="left:1697px;top:239px;width:179px;height:1px;background:#fff;"></div>
<svg class="a" style="left:1752px;top:222px;" width="16" height="16" viewBox="0 0 16 16"><rect x=".5" y=".5" width="14" height="14" fill="#fff" stroke="#a8a8c4"/><rect x="4" y="2.750" width="7.500" height="9.500" fill="#fff" stroke="#14144a" stroke-width="1.500"/><rect x="3.250" y="2" width="9" height="2" fill="#14144a"/><path d="M1.500 5.500h2.500M1.500 8h2.500M1.500 10.500h2.500" stroke="#14144a" stroke-width="1.500"/><rect x="5.800" y="5.800" width="3.700" height="1.800" fill="#14144a"/></svg>
<span class="t" style="left:1772px;top:222.0px;font-size:12px;line-height:16px;color:#000;letter-spacing:-1.133px;">CMP &lt;=</span>
<div style="left:1697px;top:258px;width:179px;height:1px;background:#fff;"></div>
<svg class="a" style="left:1752px;top:241px;" width="16" height="16" viewBox="0 0 16 16"><rect x=".5" y=".5" width="14" height="14" fill="#fff" stroke="#a8a8c4"/><rect x="4" y="2.750" width="7.500" height="9.500" fill="#fff" stroke="#14144a" stroke-width="1.500"/><rect x="3.250" y="2" width="9" height="2" fill="#14144a"/><path d="M1.500 5.500h2.500M1.500 8h2.500M1.500 10.500h2.500" stroke="#14144a" stroke-width="1.500"/><rect x="5.800" y="5.800" width="3.700" height="1.800" fill="#14144a"/></svg>
<span class="t" style="left:1772px;top:241.0px;font-size:12px;line-height:16px;color:#000;letter-spacing:-1.158px;">CMP &gt;</span>
<div style="left:1697px;top:201px;width:179px;height:1px;background:#bccbdc;"></div>
<div style="left:1697px;top:220px;width:179px;height:1px;background:#bccbdc;"></div>
<div style="left:1876px;top:144px;width:19px;height:114px;background:#f0f0f0;"></div>
<div style="left:1877px;top:144px;width:17px;height:114px;background:#c2c2c2;"></div>
<div class="btn" style="left:1877px;top:144px;width:17px;height:17px;"></div>
<svg class="a" style="left:1885.5px;top:152.5px;" width="1" height="1" viewBox="0 0 1 1"><path d="M-4 2l4-4 4 4" fill="none" stroke="#444" stroke-width="1.8"/></svg>
<div class="btn" style="left:1877px;top:241px;width:17px;height:17px;"></div>
<svg class="a" style="left:1885.5px;top:249.5px;" width="1" height="1" viewBox="0 0 1 1"><path d="M-4 -2l4 4 4-4" fill="none" stroke="#444" stroke-width="1.8"/></svg>
<div class="sb" style="left:1877px;top:176px;width:17px;height:17px;"></div>
<svg class="a" style="left:1881px;top:180px;" width="9" height="8" viewBox="0 0 9 8"><path d="M0 .5h9M0 2.5h9M0 4.5h9M0 6.5h9" stroke="#555" stroke-width="1"/></svg>
<div style="left:1698px;top:258px;width:197px;height:17px;background:#c2c2c2;"></div>
<div class="btn" style="left:1698px;top:258px;width:17px;height:17px;"></div>
<svg class="a" style="left:1706.5px;top:266.5px;" width="1" height="1" viewBox="0 0 1 1"><path d="M2 -4l-4 4 4 4" fill="none" stroke="#444" stroke-width="1.8"/></svg>
<div class="btn" style="left:1859px;top:258px;width:17px;height:17px;"></div>
<svg class="a" style="left:1867.5px;top:266.5px;" width="1" height="1" viewBox="0 0 1 1"><path d="M-2 -4l4 4-4 4" fill="none" stroke="#444" stroke-width="1.8"/></svg>
<div class="sbh" style="left:1716px;top:258px;width:107px;height:17px;"></div>
<svg class="a" style="left:1765.5px;top:262px;" width="8" height="9" viewBox="0 0 8 9"><path d="M.5 0v9M2.5 0v9M4.5 0v9M6.5 0v9" stroke="#555" stroke-width="1"/></svg>
<div style="left:1697px;top:275px;width:201px;height:3px;background:#c0c0c0;"></div>
<div class="hd" style="left:1697px;top:278px;width:201px;height:21px;border-top:1px solid #fff;border-bottom:1px solid #9a9a9a;"></div>
<div style="left:1717px;top:279px;width:1px;height:19px;background:#8a8a8a;"></div>
<svg class="a" style="left:1702px;top:284.5px;" width="10" height="8" viewBox="0 0 10 8"><path d="M1 1.5l4 4 4-4" fill="none" stroke="#000" stroke-width="2"/></svg>
<span class="t" style="left:1722px;top:279.5px;font-size:14px;line-height:18px;color:#000;-webkit-text-stroke:0.5px #000;letter-spacing:0.355px;">Erweiterte Anweisungen</span>
<div style="left:1697px;top:300px;width:201px;height:18px;background:linear-gradient(#f2f6fb,#dfe7f1 50%,#d3deeb 55%,#e4ebf4);border-bottom:1px solid #b0b0b0;"></div>
<div class="hd" style="left:1876px;top:300px;width:19px;height:18px;border-left:1px solid #a6a6a6;border-bottom:1px solid #b0b0b0;"></div>
<span class="t" style="left:1700px;top:301.5px;font-size:12px;line-height:16px;color:#000;letter-spacing:-0.252px;">Name</span>
<div style="left:1697px;top:337px;width:179px;height:1px;background:#fff;"></div>
<svg class="a" style="left:1702px;top:323.5px;" width="5" height="9" viewBox="0 0 5 9"><path d="M0 0v9l4.500-4.500z" fill="#000"/></svg>
<svg class="a" style="left:1715px;top:320px;" width="16" height="16" viewBox="0 0 16 16"><defs><linearGradient id="yg" x1="0" y1="0" x2="1" y2="1"><stop offset="0" stop-color="#fff6d0"/><stop offset="1" stop-color="#f4c64a"/></linearGradient></defs><path d="M.5 2.500h5l1.500 1.500h8v10.500h-14.500z" fill="url(#yg)" stroke="#c9a040" stroke-width="1"/></svg>
<span class="t" style="left:1736px;top:319.8px;font-size:12px;line-height:16px;color:#000;letter-spacing:0.115px;">Datum und Uhrzeit</span>
<div style="left:1697px;top:356px;width:179px;height:1px;background:#fff;"></div>
<svg class="a" style="left:1702px;top:342.5px;" width="5" height="9" viewBox="0 0 5 9"><path d="M0 0v9l4.500-4.500z" fill="#000"/></svg>
<svg class="a" style="left:1715px;top:339px;" width="16" height="16" viewBox="0 0 16 16"><defs><linearGradient id="yg" x1="0" y1="0" x2="1" y2="1"><stop offset="0" stop-color="#fff6d0"/><stop offset="1" stop-color="#f4c64a"/></linearGradient></defs><path d="M.5 2.500h5l1.500 1.500h8v10.500h-14.500z" fill="url(#yg)" stroke="#c9a040" stroke-width="1"/></svg>
<span class="t" style="left:1736px;top:338.8px;font-size:12px;line-height:16px;color:#000;letter-spacing:-0.080px;">String + Char</span>
<div style="left:1697px;top:375px;width:179px;height:1px;background:#fff;"></div>
<svg class="a" style="left:1702px;top:361.5px;" width="5" height="9" viewBox="0 0 5 9"><path d="M0 0v9l4.500-4.500z" fill="#000"/></svg>
<svg class="a" style="left:1715px;top:358px;" width="16" height="16" viewBox="0 0 16 16"><defs><linearGradient id="yg" x1="0" y1="0" x2="1" y2="1"><stop offset="0" stop-color="#fff6d0"/><stop offset="1" stop-color="#f4c64a"/></linearGradient></defs><path d="M.5 2.500h5l1.500 1.500h8v10.500h-14.500z" fill="url(#yg)" stroke="#c9a040" stroke-width="1"/></svg>
<span class="t" style="left:1736px;top:357.8px;font-size:12px;line-height:16px;color:#000;letter-spacing:-0.029px;">Prozessabbild</span>
<div style="left:1697px;top:394px;width:179px;height:1px;background:#fff;"></div>
<svg class="a" style="left:1702px;top:380.5px;" width="5" height="9" viewBox="0 0 5 9"><path d="M0 0v9l4.500-4.500z" fill="#000"/></svg>
<svg class="a" style="left:1715px;top:377px;" width="16" height="16" viewBox="0 0 16 16"><defs><linearGradient id="yg" x1="0" y1="0" x2="1" y2="1"><stop offset="0" stop-color="#fff6d0"/><stop offset="1" stop-color="#f4c64a"/></linearGradient></defs><path d="M.5 2.500h5l1.500 1.500h8v10.500h-14.500z" fill="url(#yg)" stroke="#c9a040" stroke-width="1"/></svg>
<span class="t" style="left:1736px;top:376.8px;font-size:12px;line-height:16px;color:#000;letter-spacing:0.045px;">Dezentrale Peripherie</span>
<div style="left:1697px;top:413px;width:179px;height:1px;background:#fff;"></div>
<svg class="a" style="left:1702px;top:399.5px;" width="5" height="9" viewBox="0 0 5 9"><path d="M0 0v9l4.500-4.500z" fill="#000"/></svg>
<svg class="a" style="left:1715px;top:396px;" width="16" height="16" viewBox="0 0 16 16"><defs><linearGradient id="yg" x1="0" y1="0" x2="1" y2="1"><stop offset="0" stop-color="#fff6d0"/><stop offset="1" stop-color="#f4c64a"/></linearGradient></defs><path d="M.5 2.500h5l1.500 1.500h8v10.500h-14.500z" fill="url(#yg)" stroke="#c9a040" stroke-width="1"/></svg>
<span class="t" style="left:1736px;top:395.8px;font-size:12px;line-height:16px;color:#000;letter-spacing:-0.487px;">PROFIenergy</span>
<div style="left:1697px;top:432px;width:179px;height:1px;background:#fff;"></div>
<svg class="a" style="left:1702px;top:418.5px;" width="5" height="9" viewBox="0 0 5 9"><path d="M0 0v9l4.500-4.500z" fill="#000"/></svg>
<svg class="a" style="left:1715px;top:415px;" width="16" height="16" viewBox="0 0 16 16"><defs><linearGradient id="yg" x1="0" y1="0" x2="1" y2="1"><stop offset="0" stop-color="#fff6d0"/><stop offset="1" stop-color="#f4c64a"/></linearGradient></defs><path d="M.5 2.500h5l1.500 1.500h8v10.500h-14.500z" fill="url(#yg)" stroke="#c9a040" stroke-width="1"/></svg>
<span class="t" style="left:1736px;top:414.8px;font-size:12px;line-height:16px;color:#000;letter-spacing:0.205px;">Baugruppenparametrier...</span>
<div style="left:1877px;top:319px;width:17px;height:113px;background:#c2c2c2;"></div>
<div class="btn" style="left:1877px;top:319px;width:17px;height:17px;"></div>
<svg class="a" style="left:1885.5px;top:327.5px;" width="1" height="1" viewBox="0 0 1 1"><path d="M-4 2l4-4 4 4" fill="none" stroke="#444" stroke-width="1.8"/></svg>
<div class="btn" style="left:1877px;top:415px;width:17px;height:17px;"></div>
<svg class="a" style="left:1885.5px;top:423.5px;" width="1" height="1" viewBox="0 0 1 1"><path d="M-4 -2l4 4 4-4" fill="none" stroke="#444" stroke-width="1.8"/></svg>
<div class="sb" style="left:1877px;top:337px;width:17px;height:20px;"></div>
<svg class="a" style="left:1881px;top:343px;" width="9" height="8" viewBox="0 0 9 8"><path d="M0 .5h9M0 2.5h9M0 4.5h9M0 6.5h9" stroke="#555" stroke-width="1"/></svg>
<div style="left:1698px;top:432px;width:197px;height:17px;background:#c2c2c2;"></div>
<div class="btn" style="left:1698px;top:432px;width:17px;height:17px;"></div>
<svg class="a" style="left:1706.5px;top:440.5px;" width="1" height="1" viewBox="0 0 1 1"><path d="M2 -4l-4 4 4 4" fill="none" stroke="#444" stroke-width="1.8"/></svg>
<div class="btn" style="left:1859px;top:432px;width:17px;height:17px;"></div>
<svg class="a" style="left:1867.5px;top:440.5px;" width="1" height="1" viewBox="0 0 1 1"><path d="M-2 -4l4 4-4 4" fill="none" stroke="#444" stroke-width="1.8"/></svg>
<div class="sbh" style="left:1716px;top:432px;width:107px;height:17px;"></div>
<svg class="a" style="left:1765.5px;top:436px;" width="8" height="9" viewBox="0 0 8 9"><path d="M.5 0v9M2.5 0v9M4.5 0v9M6.5 0v9" stroke="#555" stroke-width="1"/></svg>
<div style="left:1697px;top:449px;width:201px;height:3px;background:#c0c0c0;"></div>
<div class="hd" style="left:1697px;top:452px;width:201px;height:21px;border-top:1px solid #fff;border-bottom:1px solid #9a9a9a;"></div>
<div style="left:1717px;top:453px;width:1px;height:19px;background:#8a8a8a;"></div>
<svg class="a" style="left:1702px;top:458.5px;" width="10" height="8" viewBox="0 0 10 8"><path d="M1 1.5l4 4 4-4" fill="none" stroke="#000" stroke-width="2"/></svg>
<span class="t" style="left:1722px;top:453.5px;font-size:14px;line-height:18px;color:#000;-webkit-text-stroke:0.5px #000;letter-spacing:0.298px;">Technologie</span>
<div style="left:1697px;top:474px;width:201px;height:18px;background:linear-gradient(#f2f6fb,#dfe7f1 50%,#d3deeb 55%,#e4ebf4);border-bottom:1px solid #b0b0b0;"></div>
<div class="hd" style="left:1876px;top:474px;width:19px;height:18px;border-left:1px solid #a6a6a6;border-bottom:1px solid #b0b0b0;"></div>
<span class="t" style="left:1700px;top:475.5px;font-size:12px;line-height:16px;color:#000;letter-spacing:-0.252px;">Name</span>
<span class="t" style="left:1881px;top:475.5px;font-size:12px;line-height:16px;color:#000;">...</span>
<div style="left:1877px;top:493px;width:18px;height:18px;background:#d8dde4;"></div>
<div style="left:1697px;top:511px;width:198px;height:1px;background:#fff;"></div>
<svg class="a" style="left:1702px;top:497.5px;" width="5" height="9" viewBox="0 0 5 9"><path d="M0 0v9l4.500-4.500z" fill="#000"/></svg>
<svg class="a" style="left:1715px;top:494px;" width="16" height="16" viewBox="0 0 16 16"><defs><linearGradient id="yg" x1="0" y1="0" x2="1" y2="1"><stop offset="0" stop-color="#fff6d0"/><stop offset="1" stop-color="#f4c64a"/></linearGradient></defs><path d="M.5 2.500h5l1.500 1.500h8v10.500h-14.500z" fill="url(#yg)" stroke="#c9a040" stroke-width="1"/></svg>
<span class="t" style="left:1736px;top:493.8px;font-size:12px;line-height:16px;color:#000;letter-spacing:0.036px;">Zählen und Messen</span>
<div style="left:1697px;top:530px;width:198px;height:1px;background:#fff;"></div>
<svg class="a" style="left:1702px;top:516.5px;" width="5" height="9" viewBox="0 0 5 9"><path d="M0 0v9l4.500-4.500z" fill="#000"/></svg>
<svg class="a" style="left:1715px;top:513px;" width="16" height="16" viewBox="0 0 16 16"><defs><linearGradient id="yg" x1="0" y1="0" x2="1" y2="1"><stop offset="0" stop-color="#fff6d0"/><stop offset="1" stop-color="#f4c64a"/></linearGradient></defs><path d="M.5 2.500h5l1.500 1.500h8v10.500h-14.500z" fill="url(#yg)" stroke="#c9a040" stroke-width="1"/></svg>
<span class="t" style="left:1736px;top:512.8px;font-size:12px;line-height:16px;color:#000;letter-spacing:-0.275px;">PID Control</span>
<div style="left:1697px;top:549px;width:198px;height:1px;background:#fff;"></div>
<svg class="a" style="left:1702px;top:535.5px;" width="5" height="9" viewBox="0 0 5 9"><path d="M0 0v9l4.500-4.500z" fill="#000"/></svg>
<svg class="a" style="left:1715px;top:532px;" width="16" height="16" viewBox="0 0 16 16"><defs><linearGradient id="yg" x1="0" y1="0" x2="1" y2="1"><stop offset="0" stop-color="#fff6d0"/><stop offset="1" stop-color="#f4c64a"/></linearGradient></defs><path d="M.5 2.500h5l1.500 1.500h8v10.500h-14.500z" fill="url(#yg)" stroke="#c9a040" stroke-width="1"/></svg>
<span class="t" style="left:1736px;top:531.8px;font-size:12px;line-height:16px;color:#000;letter-spacing:0.069px;">Motion Control</span>
<div style="left:1697px;top:568px;width:198px;height:1px;background:#fff;"></div>
<svg class="a" style="left:1702px;top:554.5px;" width="5" height="9" viewBox="0 0 5 9"><path d="M0 0v9l4.500-4.500z" fill="#000"/></svg>
<svg class="a" style="left:1715px;top:551px;" width="16" height="16" viewBox="0 0 16 16"><defs><linearGradient id="yg" x1="0" y1="0" x2="1" y2="1"><stop offset="0" stop-color="#fff6d0"/><stop offset="1" stop-color="#f4c64a"/></linearGradient></defs><path d="M.5 2.500h5l1.500 1.500h8v10.500h-14.500z" fill="url(#yg)" stroke="#c9a040" stroke-width="1"/></svg>
<span class="t" style="left:1736px;top:550.8px;font-size:12px;line-height:16px;color:#000;letter-spacing:-0.147px;">Time-based IO</span>
<div style="left:1697px;top:587px;width:198px;height:1px;background:#fff;"></div>
<div style="left:1697px;top:606px;width:198px;height:1px;background:#fff;"></div>
<div style="left:1697px;top:625px;width:198px;height:1px;background:#fff;"></div>
<div style="left:1697px;top:644px;width:198px;height:1px;background:#fff;"></div>
<div style="left:1697px;top:663px;width:198px;height:1px;background:#fff;"></div>
<div style="left:1697px;top:682px;width:198px;height:1px;background:#fff;"></div>
<div style="left:1697px;top:701px;width:198px;height:1px;background:#fff;"></div>
<div style="left:1697px;top:720px;width:198px;height:1px;background:#fff;"></div>
<div style="left:1697px;top:739px;width:198px;height:1px;background:#fff;"></div>
<div style="left:1697px;top:758px;width:198px;height:1px;background:#fff;"></div>
<div style="left:1697px;top:777px;width:198px;height:1px;background:#fff;"></div>
<div style="left:1697px;top:796px;width:198px;height:1px;background:#fff;"></div>
<div style="left:1697px;top:815px;width:198px;height:1px;background:#fff;"></div>
<div style="left:1697px;top:834px;width:198px;height:1px;background:#fff;"></div>
<div style="left:1697px;top:853px;width:198px;height:1px;background:#fff;"></div>
<div style="left:1697px;top:872px;width:198px;height:1px;background:#fff;"></div>
<div style="left:1697px;top:891px;width:198px;height:1px;background:#fff;"></div>
<div style="left:1697px;top:910px;width:198px;height:1px;background:#fff;"></div>
<div style="left:1697px;top:929px;width:198px;height:1px;background:#fff;"></div>
<div style="left:1697px;top:948px;width:198px;height:1px;background:#fff;"></div>
<div style="left:1697px;top:967px;width:198px;height:1px;background:#fff;"></div>
<div style="left:1697px;top:986px;width:198px;height:1px;background:#fff;"></div>
<div style="left:1697px;top:1005px;width:198px;height:1px;background:#fff;"></div>
<div style="left:1877px;top:493px;width:1px;height:497px;background:#fff;"></div>
<div style="left:1698px;top:990px;width:197px;height:17px;background:#c2c2c2;"></div>
<div class="btn" style="left:1698px;top:990px;width:17px;height:17px;"></div>
<svg class="a" style="left:1706.5px;top:998.5px;" width="1" height="1" viewBox="0 0 1 1"><path d="M2 -4l-4 4 4 4" fill="none" stroke="#444" stroke-width="1.8"/></svg>
<div class="btn" style="left:1878px;top:990px;width:17px;height:17px;"></div>
<svg class="a" style="left:1886.5px;top:998.5px;" width="1" height="1" viewBox="0 0 1 1"><path d="M-2 -4l4 4-4 4" fill="none" stroke="#444" stroke-width="1.8"/></svg>
<div class="sbh" style="left:1716px;top:990px;width:128px;height:17px;"></div>
<svg class="a" style="left:1776.0px;top:994px;" width="8" height="9" viewBox="0 0 8 9"><path d="M.5 0v9M2.5 0v9M4.5 0v9M6.5 0v9" stroke="#555" stroke-width="1"/></svg>
<div style="left:1697px;top:1007px;width:201px;height:3px;background:#c0c0c0;"></div>
<div class="hd" style="left:1697px;top:1010px;width:201px;height:21px;border-top:1px solid #fff;border-bottom:1px solid #9a9a9a;"></div>
<div style="left:1717px;top:1011px;width:1px;height:19px;background:#8a8a8a;"></div>
<svg class="a" style="left:1703px;top:1015.5px;" width="8" height="10" viewBox="0 0 8 10"><path d="M1.5 1l4 4-4 4" fill="none" stroke="#000" stroke-width="2"/></svg>
<span class="t" style="left:1722px;top:1011.5px;font-size:14px;line-height:18px;color:#000;-webkit-text-stroke:0.5px #000;letter-spacing:0.347px;">Kommunikation</span>
<div style="left:1697px;top:1031px;width:201px;height:3px;background:#c0c0c0;"></div>
<div class="hd" style="left:1697px;top:1034px;width:201px;height:21px;border-top:1px solid #fff;border-bottom:1px solid #9a9a9a;"></div>
<div style="left:1717px;top:1035px;width:1px;height:19px;background:#8a8a8a;"></div>
<svg class="a" style="left:1703px;top:1039.5px;" width="8" height="10" viewBox="0 0 8 10"><path d="M1.5 1l4 4-4 4" fill="none" stroke="#000" stroke-width="2"/></svg>
<span class="t" style="left:1722px;top:1035.5px;font-size:14px;line-height:18px;color:#000;-webkit-text-stroke:0.5px #000;letter-spacing:0.325px;">Optionspakete</span>
<div style="left:1697px;top:1055px;width:201px;height:2px;background:#191e36;"></div>
<div style="left:1895px;top:0px;width:3px;height:1057px;background:#b1b1b1;"></div>
<div style="left:1895px;top:100px;width:3px;height:3px;background:#191e36;"></div>
<span class="t" style="left:1435px;top:984.0px;font-size:20px;line-height:24px;color:#a2a2a2;letter-spacing:-0.072px;">Windows aktivieren</span>
<span class="t" style="left:1435px;top:1010.2px;font-size:14.5px;line-height:18.5px;color:rgba(120,120,120,.55);letter-spacing:0.008px;">Wechseln Sie zu den Einstellungen, um Windows zu aktivieren.</span>
</body></html>
